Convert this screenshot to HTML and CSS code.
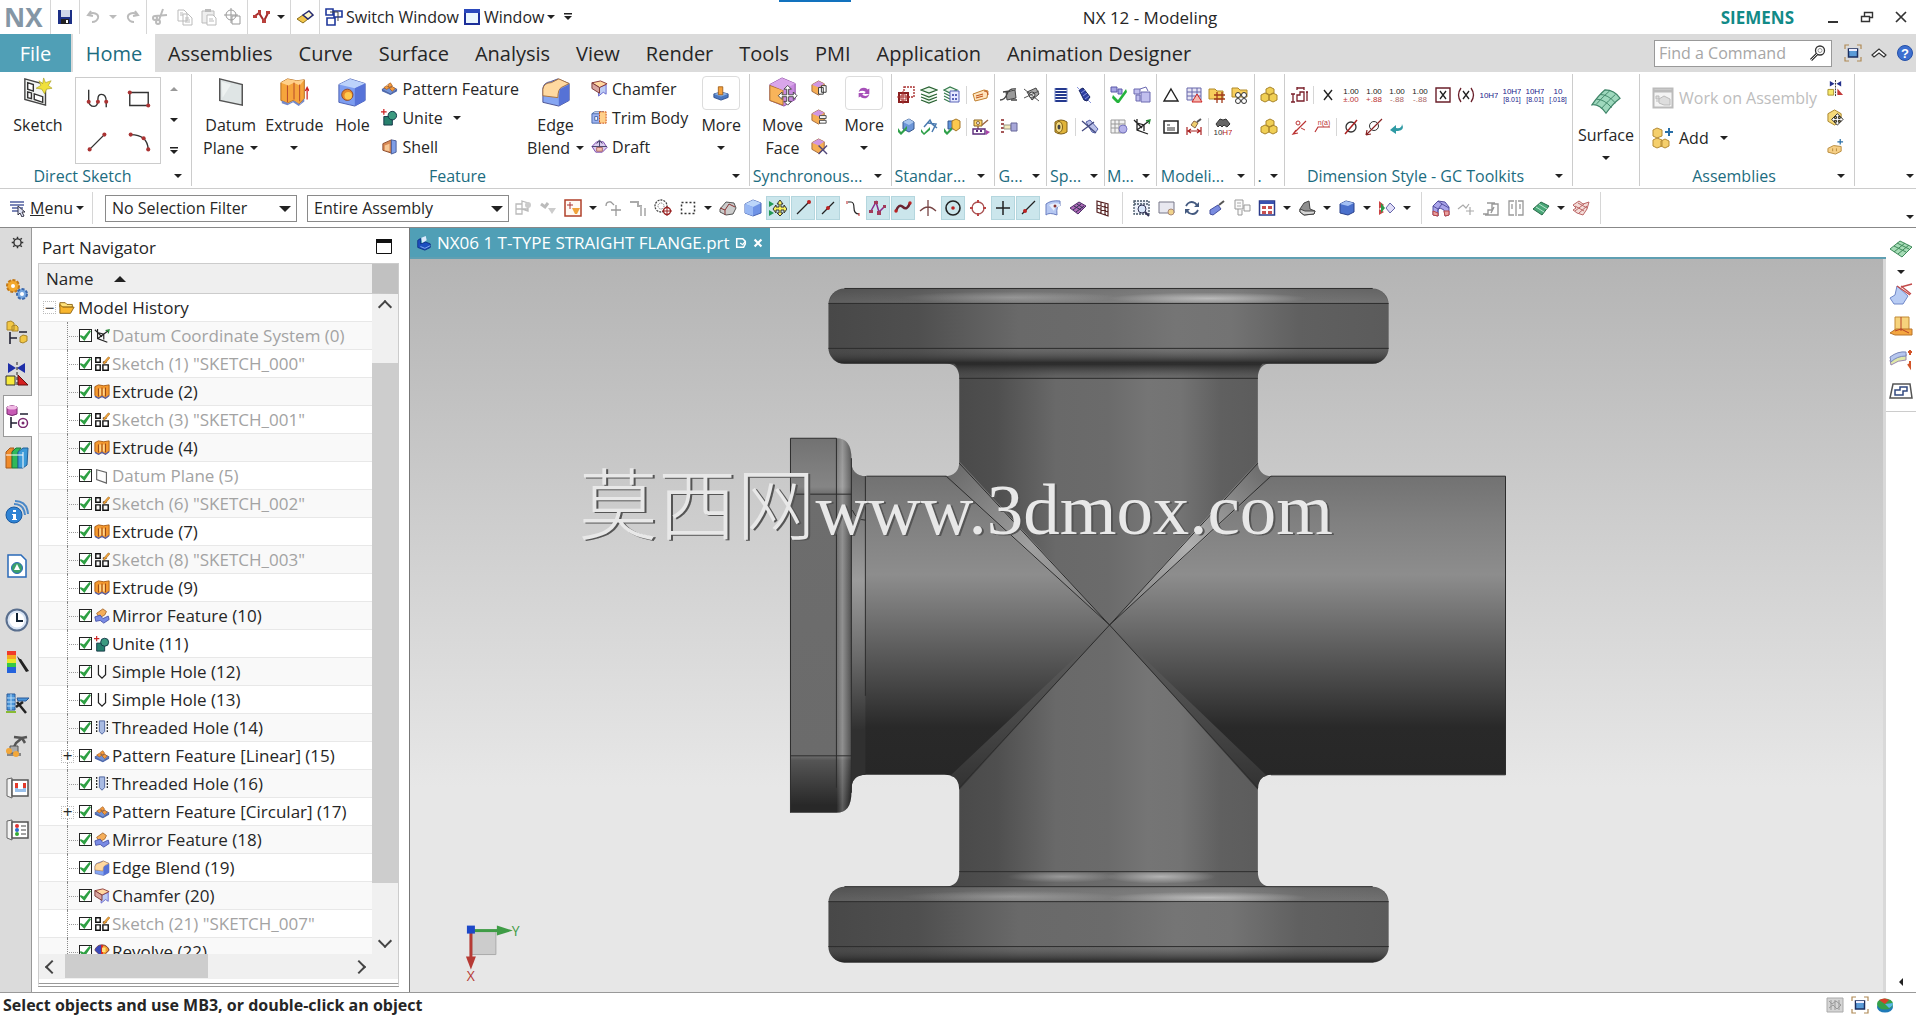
FILE: index.html
```html
<!DOCTYPE html>
<html lang="en">
<head>
  <meta charset="UTF-8" />
  <meta name="viewport" content="width=device-width, initial-scale=1" />
  <title>NX 12 - Modeling</title>
  <link rel="stylesheet" href="styles.css">
</head>
<body>

  <!-- icon sprite -->
  <svg class="sprite" aria-hidden="true">
    <!-- title bar -->
    <symbol id="save" viewBox="0 0 18 18"><path d="M2 2h14v14H2z" fill="#1c2f86"/><path d="M5 2h9v7H5z" fill="#cfd6ea"/><path d="M5 11h8v5H5z" fill="#222"/><path d="M10 12h2v3h-2z" fill="#fff"/></symbol>
    <symbol id="undo" viewBox="0 0 18 18"><path d="M6 3 3 7l5 1M3 7c5-4 11-1 10 3-1 3-3 4-6 4" fill="none" stroke="#bbb" stroke-width="2"/></symbol>
    <symbol id="redo" viewBox="0 0 18 18"><path d="m12 3 3 4-5 1M15 7C10 3 4 6 5 10c1 3 3 4 6 4" fill="none" stroke="#bbb" stroke-width="2"/></symbol>
    <symbol id="cut" viewBox="0 0 18 18"><path d="M11 1 7 12M3 8l12-1" stroke="#bbb" stroke-width="2"/><circle cx="6" cy="14" r="2" fill="none" stroke="#bbb" stroke-width="2"/><circle cx="3" cy="10" r="2" fill="none" stroke="#bbb" stroke-width="2"/></symbol>
    <symbol id="copy" viewBox="0 0 18 18"><path d="M2 2h6l3 3v8H2zM7 6h5l4 4v7H7z" fill="#fff" stroke="#bbb"/><path d="M9 10h4M9 12h5M9 14h5M4 5h3M4 7h3" stroke="#bbb"/></symbol>
    <symbol id="paste" viewBox="0 0 18 18"><path d="M2 3h12v12H2z" fill="#eee" stroke="#bbb"/><path d="M5 1h6v3H5z" fill="#bbb"/><path d="M7 7h6l3 3v7H7z" fill="#fff" stroke="#bbb"/><path d="M9 11h4M9 13h5" stroke="#bbb"/></symbol>
    <symbol id="target" viewBox="0 0 18 18"><circle cx="7" cy="7" r="5" fill="none" stroke="#999"/><path d="M7 0v15M0 7h14M8 8h8v8H8z" fill="none" stroke="#999"/></symbol>
    <symbol id="curve" viewBox="0 0 18 18"><path d="m2 8 4-3 5 8 4-8" fill="none" stroke="#a32a2a" stroke-width="2"/><path d="M0 7h4v3H0zM9 11h4v4H9zM13 3h4v3h-4zM5 2h3v4H5z" fill="#b8403c"/></symbol>
    <symbol id="eraser" viewBox="0 0 18 18"><path d="m1 11 6-4 5 4-5 4z" fill="#f3c64a" stroke="#8a6d1a"/><path d="m7 7 6-4 4 4-5 4z" fill="#fff7c8" stroke="#262a70" stroke-width="1.500"/></symbol>
    <symbol id="switchwin" viewBox="0 0 18 18"><path d="M1 1h7v6H1zM9 3h8v6H9zM2 10h8v7H2z" fill="#fff" stroke="#20399c" stroke-width="1.600"/><path d="M5 4h8v9" fill="none" stroke="#444"/></symbol>
    <symbol id="win" viewBox="0 0 18 18"><path d="M2 2h14v14H2z" fill="#eaf6ff" stroke="#1c2f9a" stroke-width="2"/><path d="M1 1h16v4H1z" fill="#2b49bd"/></symbol>
    <symbol id="custom" viewBox="0 0 10 10"><path d="M1 1h8v1.500H1zM1 4h8L5 8z" fill="#222"/></symbol>
    <symbol id="minimize" viewBox="0 0 14 14"><path d="M2 11h10v2H2z" fill="#333"/></symbol>
    <symbol id="restore" viewBox="0 0 14 14"><path d="M1.500 6.500h8v5h-8zM4.500 6V2.500h8v5H10" fill="none" stroke="#333" stroke-width="1.400"/></symbol>
    <symbol id="close" viewBox="0 0 14 14"><path d="m2 2 10 10M12 2 2 12" stroke="#333" stroke-width="1.700"/></symbol>
    <symbol id="search" viewBox="0 0 18 18"><circle cx="11" cy="6.500" r="4.500" fill="#fff" stroke="#333" stroke-width="1.300"/><path d="M8 10 2 16" stroke="#333" stroke-width="3"/><path d="m8 10-6 6" stroke="#ddd"/><circle cx="11" cy="6.500" r="2" fill="none" stroke="#999"/></symbol>
    <symbol id="full" viewBox="0 0 18 18"><path d="M1 5V1h4M13 1h4v4M17 13v4h-4M5 17H1v-4" fill="none" stroke="#b08a55" stroke-width="1.200"/><path d="M4.500 5h9v8h-9z" fill="#5b9bd8" stroke="#1c2f60" stroke-width="1.500"/><path d="M5 5h8v2H5z" fill="#eef"/></symbol>
    <symbol id="collapse" viewBox="0 0 18 18"><path d="m2 11 7-6 7 6-2 2-5-4-5 4z" fill="#fff" stroke="#333" stroke-width="1.200"/></symbol>
    <symbol id="help" viewBox="0 0 18 18"><circle cx="9" cy="9" r="7.500" fill="#3d6fd0" stroke="#2450a8"/><text x="9" y="14" font-size="13" font-weight="bold" fill="#fff" text-anchor="middle">?</text></symbol>

    <!-- ribbon, large -->
    <symbol id="sketch" viewBox="0 0 32 32"><path d="m2 2 22 6v22L2 24z" fill="#f3f5f3" stroke="#444" stroke-width="1.500"/><path d="m5 6 6 2v7l-6-2zM5 16l4 1v6l-4-1zM12 18l9 3v6l-9-3z" fill="#fff" stroke="#333" stroke-width="1.500"/><path d="m22 1 2 5 6-2-3 5 4 3-6 1-2 5-3-5-6-1 5-3-2-5 4 3z" fill="#f0e03c" stroke="#a8a029" stroke-width=".7"/></symbol>
    <symbol id="datum" viewBox="0 0 32 32"><path d="m4 2 24 6v22L4 25z" fill="#dfe5e5" stroke="#555" stroke-width="1.600"/><path d="m6 5 10 3-9 14z" fill="#eef2f1"/></symbol>
    <symbol id="extrude" viewBox="0 0 32 32"><path d="m2 6 7-4 10 2 8-1v20l-6 6-6-4-6 3-7-3z" fill="#f6a53c" stroke="#b06a1c"/><path d="m2 6 7-4 10 2 8-1-5 6-6-3-6 3z" fill="#ffd08a"/><path d="M9 9v18M16 6v18M22 8v18" stroke="#b3442a"/><path d="m3 25 7 3 6-3 6 4 5-6v3l-6 5-6-4-6 3-6-2z" fill="#7489c8"/><path d="M30 24V12m-2 3 2-4 2 4" fill="none" stroke="#c22" stroke-width="1.300"/></symbol>
    <symbol id="hole" viewBox="0 0 32 32"><path d="m2 8 12-6 16 5v18l-11 6-17-4z" fill="#7d9df0" stroke="#4a5eb0"/><path d="m2 8 12-6 16 5-11 5z" fill="#bcd2fb"/><path d="m19 12 11-5v18l-11 6z" fill="#5773d8"/><circle cx="11" cy="19" r="6" fill="#e78a2a" stroke="#8a4a30"/><circle cx="12" cy="20" r="4" fill="#ffc94e"/></symbol>
    <symbol id="blend" viewBox="0 0 32 32"><path d="M2 12q1-6 8-7l8-3 12 5v18l-11 6-17-4z" fill="#86a6f2" stroke="#4a5090"/><path d="M2 20V13q1-7 9-7l8-4 11 5-8 4q-4 2-4 11z" fill="#ffd9a0" stroke="#a8703c"/><path d="m19 22 1-9 10-5v17l-11 6z" fill="#5672d6"/></symbol>
    <symbol id="moveface" viewBox="0 0 32 32"><path d="m2 8 13-7 14 6v17l-12 7-15-6z" fill="#c98ae0" stroke="#8a4aa0"/><path d="m2 9 14 5v16L2 25z" fill="#f8b45a" stroke="#b0742c"/><path d="m2 8 13-7 14 6-13 7z" fill="#d9a6ea"/><path d="m21 9 4 4h-3v6h5v-3l4 4-4 4v-3h-5v5h3l-4 4-4-4h3v-5h-5v3l-4-4 4-4v3h5v-6h-3z" fill="#fff" stroke="#444"/></symbol>
    <symbol id="boss" viewBox="0 0 18 18"><path d="M1 10l8-2 8 2v4l-8 3-8-3z" fill="#4b78c0" stroke="#2c4c88"/><path d="m1 10 8-2 8 2-8 3z" fill="#8ab2e6"/><path d="M6 2h5v9H6z" fill="#f4a13c" stroke="#a0601c"/></symbol>
    <symbol id="swap" viewBox="0 0 18 18"><path d="M3 8q1-5 6-5 3 0 4 2l2-1v6h-6l2-2q-4-3-8 0zM15 10q-1 5-6 5-3 0-4-2l-2 1V9h6l-2 2q4 3 8-1z" fill="#a64fb8"/></symbol>
    <symbol id="surface" viewBox="0 0 32 32"><path d="M1 19Q8 9 15 3q10 0 16 9-8 6-15 16Q9 18 1 19z" fill="#9ed8bd" stroke="#3f8468" stroke-width="1.300"/><path d="M6 13q8 0 16 9M10 8q8 0 16 9M6 18q7-8 14-14M11 23q8-9 15-15" fill="none" stroke="#3f8468"/></symbol>

    <!-- direct sketch -->
    <symbol id="profile" viewBox="0 0 26 26"><path d="M4 3v11q0 7 6 7 4 0 4-8 0-5 4-5 5 0 5 8v6" fill="none" stroke="#333" stroke-width="1.500"/><g fill="#a33"><circle cx="4" cy="16" r="2.200"/><circle cx="14" cy="16" r="2.200"/><circle cx="23" cy="16" r="2.200"/></g></symbol>
    <symbol id="rect" viewBox="0 0 26 26"><path d="M3 6h20v14H3z" fill="none" stroke="#333" stroke-width="1.500"/><g fill="#a33"><circle cx="3" cy="6" r="2.200"/><circle cx="23" cy="20" r="2.200"/></g></symbol>
    <symbol id="line" viewBox="0 0 26 26"><path d="M5 21 21 5" stroke="#333" stroke-width="1.500"/><g fill="#a33"><circle cx="5" cy="21" r="2.200"/><circle cx="21" cy="5" r="2.200"/></g></symbol>
    <symbol id="arc" viewBox="0 0 26 26"><path d="M4 5q18 0 19 16" fill="none" stroke="#333" stroke-width="1.500"/><g fill="#a33"><circle cx="4" cy="5" r="2.200"/><circle cx="18" cy="9" r="2.200"/><circle cx="23" cy="21" r="2.200"/></g></symbol>

    <!-- ribbon, small -->
    <symbol id="pattern" viewBox="0 0 18 18"><path d="m1 10 8-4 8 4-7 5z" fill="#6f92d8" stroke="#4a5a90"/><path d="m1 10 9 5 7-5v2l-7 4-9-4z" fill="#4a66ad"/><path d="m3 8 3-2 3 2-3 2zM7 5l3-2 2 3-3 2zM9 9l3-2 3 2-3 3z" fill="#f49a3c" stroke="#a35a1c" stroke-width=".7"/></symbol>
    <symbol id="unite" viewBox="0 0 18 18"><path d="M3 8h9v9H3z" fill="#27806d" stroke="#134"/><circle cx="12" cy="7" r="4.500" fill="#3c9a80" stroke="#134"/><path d="M3 0v6M0 3h6" stroke="#c22" stroke-width="1.300"/></symbol>
    <symbol id="shell" viewBox="0 0 18 18"><path d="m2 6 9-4v14L2 13z" fill="#d98a55" stroke="#8a4a2a"/><path d="m11 2 5 1v12l-5 2z" fill="#7f9ee6" stroke="#4a5e9a"/><path d="m4 8 5-2v8l-5-1z" fill="#f7c896"/></symbol>
    <symbol id="chamfer" viewBox="0 0 18 18"><path d="m8 8 8-3v10l-3-2-5 4z" fill="#bccbf4" stroke="#66c"/><path d="m1 3 9-2 7 3-8 4z" fill="#ffd7a0" stroke="#833"/><path d="m1 3 8 5v6L1 9z" fill="#d9a6a0" stroke="#733"/></symbol>
    <symbol id="trim" viewBox="0 0 18 18"><path d="M1 5h9v10H1z" fill="#9db3f0" stroke="#46a"/><path d="M1 5l3-2h9v3" fill="none" stroke="#46a"/><path d="M9 3h7v12H9z" fill="#ffd08a" stroke="#c40" stroke-dasharray="2 1"/><path d="M4 8h3v4H4z" fill="#fff" stroke="#46a"/></symbol>
    <symbol id="draft" viewBox="0 0 18 18"><path d="m1 9 5-5 7 0 4 6-5 5H5z" fill="#dccdf0" stroke="#74a"/><path d="M9 3v10M6 6l3-4 3 4M1 9h16" fill="none" stroke="#446"/><path d="M6 10h6v4H6z" fill="#f4c0b0" stroke="#a66"/></symbol>
    <symbol id="facecopy" viewBox="0 0 18 18"><path d="m1 5 7-4 6 3v8l-6 4-7-4z" fill="#f6ae55" stroke="#a0683c"/><path d="m1 5 7-4 6 3-6 4z" fill="#cf96e2"/><path d="M8 8h5v7H8zM11 6h5v7h-5z" fill="#fff" stroke="#333"/></symbol>
    <symbol id="faceoff" viewBox="0 0 18 18"><path d="m1 5 7-4 6 3v8l-6 4-7-4z" fill="#f6ae55" stroke="#a0683c"/><path d="m1 5 7-4 6 3-6 4z" fill="#cf96e2"/><path d="M9 7h7v3H9zM9 12h7v3H9z" fill="#fff" stroke="#444"/></symbol>
    <symbol id="facedel" viewBox="0 0 18 18"><path d="m1 5 7-4 6 3v8l-6 4-7-4z" fill="#f6ae55" stroke="#a0683c"/><path d="m1 5 7-4 6 3-6 4z" fill="#cf96e2"/><path d="m8 8 9 9M17 8l-9 9" stroke="#52487a" stroke-width="1.500"/></symbol>

    <!-- gc toolkits -->
    <symbol id="gcframe" viewBox="0 0 18 18"><path d="M7 1h10v10H7z" fill="none" stroke="#a33" stroke-width="1.400" stroke-dasharray="2 1"/><path d="M2 7h9v9H2z" fill="#fff0ea" stroke="#8a1f1f" stroke-width="2"/><path d="M4 9h5v5H4zM0 11h13M6 5v13" fill="none" stroke="#a33"/></symbol>
    <symbol id="layers" viewBox="0 0 18 18"><path d="m1 4 8-3 8 3-8 3zM1 8l8 3 8-3M1 11l8 3 8-3M1 14l8 3 8-3" fill="#e9f7ea" stroke="#276030" stroke-width="1.200"/></symbol>
    <symbol id="laytab" viewBox="0 0 18 18"><path d="m1 4 6-3 7 3-7 3zM1 7l6 3M1 10l6 3M1 13l6 3" fill="#e9f7ea" stroke="#357a4c" stroke-width="1.200"/><path d="M7 5h9v11H7z" fill="#e6e9ff" stroke="#5a64b8"/><path d="M9 8h2v2H9zM12 8h2v2h-2zM9 12h2v2H9zM12 12h2v2h-2z" fill="#5a64b8"/></symbol>
    <symbol id="note" viewBox="0 0 18 18"><path d="m1 8 11-4 4 1-1 7-12 3z" fill="#ffe4bd" stroke="#c08030"/><path d="m4 10 7-2M4 12l7-2M12 5q4 0 4 4" fill="none" stroke="#c05a20" stroke-width="1.200"/></symbol>
    <symbol id="cubechk" viewBox="0 0 18 18"><path d="m6 4 6-3 5 3v7l-5 3-6-3z" fill="#6c96d8" stroke="#36588e"/><path d="m6 4 6-3 5 3-5 3z" fill="#a8c6ee"/><path d="m1 10 3 4 6-6v3l-6 6-3-3z" fill="#2fa04a"/></symbol>
    <symbol id="wirechk" viewBox="0 0 18 18"><path d="m4 9 6-7 2 4 5 4M8 5l8 1-4 8" fill="none" stroke="#4a7ab0" stroke-width="1.500"/><path d="m1 11 3 4 6-6v3l-6 5-3-3z" fill="#2fa04a"/></symbol>
    <symbol id="boxchk" viewBox="0 0 18 18"><path d="M5 3h7v8H5z" fill="#5f93dc" stroke="#36588e"/><path d="m9 3 4-2 4 2v7l-4 3-4-3z" fill="#fcc94e" stroke="#a8792a"/><path d="m1 10 3 4 5-5v3l-5 5-3-3z" fill="#2fa04a"/></symbol>
    <symbol id="robot" viewBox="0 0 18 18"><path d="M2 2h8v6H2z" fill="#ffd66a" stroke="#8a6420"/><circle cx="6" cy="5" r="1.500" fill="#fff" stroke="#864"/><path d="m10 7 6-5M6 8v4" stroke="#964" stroke-width="1.500"/><path d="M1 11h12v5H1z" fill="#fff" stroke="#5a2a7a" stroke-width="1.400"/><path d="M4 13h2M8 13h2" stroke="#5a2a7a" stroke-width="2"/><path d="m14 12 4 2-4 3z" fill="#a4a"/></symbol>
    <symbol id="gear1" viewBox="0 0 18 18"><path d="m6 6 9-2 1 8-9 2z" fill="#9a9a9a" stroke="#444"/><path d="M0 14q5 0 7-6t9-5M3 6l7-1M11 14h6" fill="none" stroke="#444" stroke-width="1.300"/></symbol>
    <symbol id="gear2" viewBox="0 0 18 18"><path d="m4 6 9-4 3 6-7 6z" fill="#aaa" stroke="#444"/><circle cx="9" cy="9" r="3" fill="#ddd" stroke="#444"/><path d="m1 3 15 12M1 12l15-7" stroke="#555"/></symbol>
    <symbol id="gear3" viewBox="0 0 18 18"><path d="M1 2h4M1 6h4M1 10h4M1 14h4" stroke="#822" stroke-width="1.300" stroke-dasharray="3 1"/><path d="M4 7h7v4H4z" fill="#f4ecc0" stroke="#998"/><path d="M11 5h6v8h-6z" fill="#a8a8d8" stroke="#669"/></symbol>
    <symbol id="coil" viewBox="0 0 18 18"><path d="M3 3h12M3 6h12M3 9h12M3 12h12M3 15h12" stroke="#24398e" stroke-width="2"/><path d="M3 2v14M15 2v14" stroke="#7f90cc"/></symbol>
    <symbol id="coil2" viewBox="0 0 18 18"><path d="m4 4 4-2 7 9-3 4-3-1z" fill="#2e3fa2" stroke="#16235e"/><path d="m2 1 3 3m8 10 3 3M6 7l4-3M8 10l4-3M10 13l4-3" stroke="#8a96dc"/></symbol>
    <symbol id="bearing" viewBox="0 0 18 18"><path d="M3 4q6-4 12 0v10q-6 4-12 0z" fill="#e0b43a" stroke="#806018"/><ellipse cx="7" cy="9" rx="3.500" ry="5.500" fill="#f6dc80" stroke="#806018"/><ellipse cx="7" cy="9" rx="1.500" ry="2.500" fill="#444"/></symbol>
    <symbol id="coildel" viewBox="0 0 18 18"><path d="m5 4 4-2 8 9-3 4-3-1z" fill="#b9c0e8" stroke="#5560a8"/><path d="m1 3 14 12M1 13 13 4" stroke="#444a80" stroke-width="1.300"/></symbol>
    <symbol id="mchk" viewBox="0 0 18 18"><path d="M1 1h6v5H1zM8 3h4v5H8z" fill="#a7a5e4" stroke="#5a58a8"/><path d="m3 9 5 5 8-11 1 3-8 11h-2L2 12z" fill="#24b33c"/></symbol>
    <symbol id="mstack" viewBox="0 0 18 18"><path d="M1 3h6v5H1zM8 6h9v10H8zM3 9h4v6H3z" fill="#c1bfee" stroke="#6a68b0"/><path d="m7 3 6-2 2 4" fill="none" stroke="#6a68b0"/></symbol>
    <symbol id="mtab" viewBox="0 0 18 18"><path d="M1 2h14v13H1zM5 2v13M9 2v13M1 6h14M1 10h14" fill="#f2f2f2" stroke="#999"/><circle cx="13" cy="11" r="4" fill="#b6b3ea" stroke="#7a78c0"/></symbol>
    <symbol id="csys" viewBox="0 0 18 18"><path d="M4 1v11l11 4M4 12 16 3M4 5l7 2v6M1 2l8 8" fill="none" stroke="#222" stroke-width="1.300"/><path d="m13 3 4-1-1 4" fill="none" stroke="#283" stroke-width="1.300"/></symbol>
    <symbol id="tri" viewBox="0 0 18 18"><path d="m9 3 7 12H2z" fill="none" stroke="#222" stroke-width="1.400"/></symbol>
    <symbol id="tabtri" viewBox="0 0 18 18"><path d="M2 2h14v12H2zM2 6h14M2 10h14M7 2v12M12 2v12" fill="#e8e6f4" stroke="#66a"/><path d="m12 8 5 8H7z" fill="#f6b8b0" stroke="#c22"/></symbol>
    <symbol id="foldhash" viewBox="0 0 18 18"><path d="M1 3h6l2 2h6v8H1z" fill="#f7ce5c" stroke="#b08a2a"/><path d="M6 9h11M6 13h11M9 6v11M14 6v11" stroke="#a03a1a" stroke-width="1.300"/></symbol>
    <symbol id="foldring" viewBox="0 0 18 18"><path d="M1 2h6l2 2h7v7H1z" fill="#f7ce5c" stroke="#b08a2a"/><g fill="#fff" stroke="#333"><circle cx="7" cy="9" r="2.500"/><circle cx="13" cy="9" r="2.500"/><circle cx="7" cy="15" r="2.500"/><circle cx="13" cy="15" r="2.500"/></g></symbol>
    <symbol id="card" viewBox="0 0 18 18"><path d="M2 3h14v12H2z" fill="#fff" stroke="#222" stroke-width="1.500"/><path d="M5 7h3M5 10h8M5 12h8" stroke="#333"/></symbol>
    <symbol id="dimbrush" viewBox="0 0 18 18"><path d="M2 9v8M16 9v8M3 13h12M6 11l-3 2 3 2M12 11l3 2-3 2" fill="none" stroke="#a22" stroke-width="1.200"/><path d="m6 7 3-4 4 2-3 5z" fill="#f0d070" stroke="#864"/><path d="m12 4 4-3" stroke="#555" stroke-width="2"/></symbol>
    <symbol id="find" viewBox="0 0 18 18"><path d="m2 6 4-5 3 1 3-1 4 5-3 3-3-2-2 2-2-2-2 2z" fill="#666" stroke="#333"/><text x="9" y="17" font-size="8" text-anchor="middle" fill="#333">10<tspan fill="#b22">H7</tspan></text></symbol>
    <symbol id="cubes" viewBox="0 0 18 18"><g fill="#f0cf55" stroke="#a8842a"><path d="m6 3 4-2 4 2v4l-4 2-4-2zM1 9l4-2 4 2v5l-4 2-4-2zM9 9l4-2 4 2v5l-4 2-4-2z"/></g></symbol>
    <symbol id="dimrect" viewBox="0 0 18 18"><path d="M7 2h7M7 1v3M14 1v3M1 8h4M3 8v8M1 16h4M7 15V9h3V6h4v9zM16 6h2M17 6v9" fill="none" stroke="#7a1f2a" stroke-width="1.300"/></symbol>
    <symbol id="xx" viewBox="0 0 18 18"><path d="m5 4 8 10M13 4 5 14" stroke="#222" stroke-width="1.400"/></symbol>
    <symbol id="tol1" viewBox="0 0 18 18"><text x="9" y="8" font-size="8" text-anchor="middle" fill="#222">1.00</text><text x="9" y="16" font-size="8" text-anchor="middle" fill="#b33">±.00</text></symbol>
    <symbol id="tol2" viewBox="0 0 18 18"><text x="9" y="8" font-size="8" text-anchor="middle" fill="#222">1.00</text><text x="9" y="16" font-size="8" text-anchor="middle" fill="#b33">+.88</text></symbol>
    <symbol id="tol3" viewBox="0 0 18 18"><text x="9" y="8" font-size="8" text-anchor="middle" fill="#222">1.00</text><text x="9" y="16" font-size="8" text-anchor="middle" fill="#a66">-.88</text></symbol>
    <symbol id="xbox" viewBox="0 0 18 18"><path d="M2 2h14v14H2z" fill="none" stroke="#6a1f2a" stroke-width="1.400"/><path d="m6 5 6 8M12 5l-6 8" stroke="#222" stroke-width="1.300"/></symbol>
    <symbol id="xpar" viewBox="0 0 18 18"><path d="M4 2q-5 7 0 14M14 2q5 7 0 14" fill="none" stroke="#6a1f2a" stroke-width="1.300"/><path d="m6 5 6 8M12 5l-6 8" stroke="#222" stroke-width="1.300"/></symbol>
    <symbol id="fit1" viewBox="0 0 18 18"><text x="9" y="12" font-size="8" text-anchor="middle" fill="#22228a">10H7</text></symbol>
    <symbol id="fit2" viewBox="0 0 18 18"><text x="9" y="8" font-size="8" text-anchor="middle" fill="#22228a">10H7</text><text x="9" y="16" font-size="7" text-anchor="middle" fill="#22228a">[8.01]</text></symbol>
    <symbol id="fit3" viewBox="0 0 18 18"><text x="9" y="8" font-size="8" text-anchor="middle" fill="#22228a">10</text><text x="9" y="16" font-size="7" text-anchor="middle" fill="#22228a">[.018]</text></symbol>
    <symbol id="redslash" viewBox="0 0 18 18"><path d="M3 16 16 3M6 12l-3 4 5-1" fill="none" stroke="#b33" stroke-width="1.200"/><circle cx="8" cy="5" r="2" fill="none" stroke="#b33"/><path d="m11 10 4 2" stroke="#b33"/></symbol>
    <symbol id="rednote" viewBox="0 0 18 18"><path d="M2 14 5 9h12" fill="none" stroke="#b33" stroke-width="1.200"/><text x="11" y="7" font-size="7" text-anchor="middle" fill="#b33">n(a)</text></symbol>
    <symbol id="dia" viewBox="0 0 18 18"><circle cx="9" cy="9" r="5" fill="none" stroke="#333" stroke-width="1.300"/><path d="M3 16 15 2" stroke="#a22" stroke-width="1.500"/></symbol>
    <symbol id="dia2" viewBox="0 0 18 18"><circle cx="9" cy="8" r="4.500" fill="none" stroke="#333"/><path d="M1 17 17 1M1 17l1-5M1 17l5-1" fill="none" stroke="#822" stroke-width="1.200"/></symbol>
    <symbol id="back" viewBox="0 0 18 18"><path d="M14 6q3 6-4 7H8v3l-6-4 6-5v3q6 1 6-4z" fill="#2f9aa4"/></symbol>

    <!-- assemblies -->
    <symbol id="workasm" viewBox="0 0 22 22"><path d="M1.500 1.500h19v19h-19z" fill="#f4f4f4" stroke="#bbb" stroke-width="2"/><path d="M2 4h18" stroke="#bbb" stroke-width="3"/><path d="m7 12 5-3 6 3v6h-6l-5-2zM4 9h3v3H4zM4 14h3" fill="#ddd" stroke="#bbb"/></symbol>
    <symbol id="addasm" viewBox="0 0 22 22"><g fill="#f5cf6c" stroke="#b58b35"><path d="m1 3 4-2 5 2v6l-5 2-4-2zM1 13l4-2 5 2v6l-5 2-4-2zM9 14l4-2 4 2v5l-4 2-4-2z"/></g><path d="M17 1v8M13 5h8" stroke="#2a6fa8" stroke-width="2"/></symbol>
    <symbol id="mirrorasm" viewBox="0 0 18 18"><path d="m3 1 5 3-5 3zM15 1l-5 3 5 3z" fill="#23308c"/><path d="M9 0v18" stroke="#333" stroke-dasharray="2 1"/><path d="M1 10h6v6H1z" fill="#f7e96a" stroke="#a89030"/><path d="M11 9v7h6z" fill="#c23a3a"/></symbol>
    <symbol id="moveasm" viewBox="0 0 18 18"><path d="m1 5 7-4 7 4v8l-7 4-7-4z" fill="#f5d97a" stroke="#a8842a"/><path d="m11 5 3 3h-2v2h2V8l3 3-3 3v-2h-2v2h2l-3 3-3-3h2v-2H8v2l-3-3 3-3v2h2V8H8z" fill="#fff" stroke="#222"/></symbol>
    <symbol id="conasm" viewBox="0 0 18 18"><path d="m1 11 6-3 8 1v5l-6 3-8-2z" fill="#f6cf86" stroke="#b88a3a"/><path d="M6 11v3M10 11v3" stroke="#b88a3a"/><path d="M14 1v6M11 4h6" stroke="#2a6fa8" stroke-width="1.300"/></symbol>

    <!-- selection bar -->
    <symbol id="menu" viewBox="0 0 18 18"><path d="M1 3h14M1 6h14M3 9h11M3 12h6" stroke="#5260a0" stroke-width="1.500"/><path d="m9 7 7 6h-3l2 4-2 1-2-4-2 2z" fill="#dfe3f4" stroke="#334"/></symbol>
    <symbol id="gr1" viewBox="0 0 18 18"><path d="M2 5h6v10H2zM2 10h12M8 2l6 2v8l-6-2z" fill="none" stroke="#bbb" stroke-width="1.300"/><circle cx="14" cy="6" r="3" fill="#ccc"/></symbol>
    <symbol id="gr2" viewBox="0 0 18 18"><path d="m2 5 4 3 3-4" fill="none" stroke="#bbb" stroke-width="3"/><path d="M9 9h8l-4 6z" fill="#ccc"/></symbol>
    <symbol id="selfilt" viewBox="0 0 18 18"><path d="M1 1h16v16H1z" fill="#fffaf4" stroke="#b0402a" stroke-width="1.500"/><path d="M6 3v7M3 6h6" stroke="#a33"/><path d="M8 9h8l-3 6h-2z" fill="#f0a23a"/></symbol>
    <symbol id="gr3" viewBox="0 0 18 18"><path d="M2 7q0-5 5-4l3 3M12 6v11M7 11h10" fill="none" stroke="#999" stroke-width="1.300"/></symbol>
    <symbol id="gr4" viewBox="0 0 18 18"><path d="M1 3h8v4h4" fill="none" stroke="#aaa" stroke-width="2"/><path d="M11 7h2v10h-2zM15 9h2v8h-2z" fill="#bbb"/></symbol>
    <symbol id="pick" viewBox="0 0 18 18"><circle cx="7" cy="7" r="6" fill="none" stroke="#444" stroke-width="1.300" stroke-dasharray="2 1"/><circle cx="7" cy="7" r="3" fill="none" stroke="#666" stroke-dasharray="1 1"/><circle cx="13" cy="12" r="3.500" fill="#fff" stroke="#922" stroke-width="1.400"/><path d="M13 7v10M8 12h10" stroke="#922"/></symbol>
    <symbol id="marquee" viewBox="0 0 18 18"><path d="M2.500 3.500h13v11h-13z" fill="none" stroke="#333" stroke-width="1.500" stroke-dasharray="2 2"/></symbol>
    <symbol id="bodyred" viewBox="0 0 18 18"><path d="m1 10 6-7 8 1 2 5-3 6-7 1-6-3z" fill="#ccc" stroke="#555"/><path d="m1 9 5 2 4-6M6 11v5M10 5l6 3" fill="none" stroke="#833"/></symbol>
    <symbol id="cube" viewBox="0 0 18 18"><path d="m1 5 8-4 8 3v10l-8 3-8-3z" fill="#6f93e6" stroke="#4a66b4"/><path d="m1 5 8-4 8 3-8 4z" fill="#bcd6fa"/><path d="M1 5l8 3v9l-8-3z" fill="#98b8f4"/></symbol>
    <symbol id="snap" viewBox="0 0 18 18"><path d="m0 2 5 3-5 3zM0 11l5 3-5 3z" fill="#295"/><path d="m11 1 3 4h-2v3h3V6l3 4-3 4v-3h-3v3h2l-3 3-3-3h2v-3H7v3l-3-4 3-4v2h3V5H8z" fill="#f7ee5c" stroke="#333"/></symbol>
    <symbol id="sn-end" viewBox="0 0 18 18"><path d="M3 15 14 4" stroke="#222" stroke-width="1.300"/><circle cx="15" cy="3" r="2" fill="#b22"/></symbol>
    <symbol id="sn-mid" viewBox="0 0 18 18"><path d="M3 15 15 3" stroke="#222" stroke-width="1.300"/><circle cx="9" cy="9" r="2" fill="#b22"/></symbol>
    <symbol id="sn-ctrl" viewBox="0 0 18 18"><path d="M4 3h3q3 0 3 6t5 6" fill="none" stroke="#222" stroke-width="1.200"/><path d="M3 2v3M15 14v3" stroke="#b22"/></symbol>
    <symbol id="sn-pole" viewBox="0 0 18 18"><path d="m2 12 5-9 3 10 6-6" fill="none" stroke="#8a2a8a" stroke-width="1.500"/><path d="M0 11h4v3H0zM5 2h4v3H5zM8 12h4v4H8zM14 6h3v3h-3z" fill="#a23a5a"/></symbol>
    <symbol id="sn-spl" viewBox="0 0 18 18"><path d="M2 12q3-8 7-4t7-4" fill="none" stroke="#6a2330" stroke-width="2.500"/><circle cx="2" cy="12" r="1.700" fill="#b22"/><circle cx="16" cy="4" r="1.700" fill="#b22"/></symbol>
    <symbol id="sn-int" viewBox="0 0 18 18"><path d="M9 1v16M1 12q8-8 16 0" fill="none" stroke="#744" stroke-width="1.300"/></symbol>
    <symbol id="sn-cen" viewBox="0 0 18 18"><circle cx="9" cy="9" r="7" fill="none" stroke="#222" stroke-width="1.600"/><circle cx="9" cy="9" r="1.800" fill="#b22"/></symbol>
    <symbol id="sn-quad" viewBox="0 0 18 18"><circle cx="9" cy="9" r="6" fill="none" stroke="#a55" stroke-width="1.300"/><path d="M8 1h2v3H8zM8 14h2v3H8zM1 8h3v2H1zM14 8h3v2h-3z" fill="#b44"/></symbol>
    <symbol id="sn-pt" viewBox="0 0 18 18"><path d="M9 2v14M2 9h14" stroke="#222" stroke-width="1.500"/></symbol>
    <symbol id="sn-on" viewBox="0 0 18 18"><path d="M3 15 16 2" stroke="#222" stroke-width="1.300"/><circle cx="6" cy="12" r="2" fill="#b22"/></symbol>
    <symbol id="sn-face" viewBox="0 0 18 18"><path d="M2 5q5-4 14-3v5q-4-1-3 9-8-3-11 0z" fill="#b6c8f2" stroke="#6a7ec0"/><path d="M5 6q5-3 11-1v3q-5-1-6 4z" fill="#e8effc"/><circle cx="11" cy="7" r="1.500" fill="#833"/></symbol>
    <symbol id="sn-mesh" viewBox="0 0 18 18"><path d="m1 9 9-6 7 4-8 8z" fill="#b06ab8" stroke="#50306a"/><path d="m5 7 7 4M8 5l6 4M4 11l8-6M7 13l8-6" stroke="#335"/></symbol>
    <symbol id="sn-grid" viewBox="0 0 18 18"><path d="m3 2 11 3v12L3 13zM7 3v11M11 4v12M3 6l11 3M3 9l11 4" fill="none" stroke="#522" stroke-width="1.200"/></symbol>
    <symbol id="zoomfit" viewBox="0 0 18 18"><path d="M1 2h15v13H1zM1 5h15" fill="#eef2fa" stroke="#456" stroke-width="1.300" stroke-dasharray="2 1"/><circle cx="9" cy="10" r="4" fill="#dbe9fb" stroke="#335"/><path d="m12 13 4 4" stroke="#335" stroke-width="2"/></symbol>
    <symbol id="zoomwin" viewBox="0 0 18 18"><path d="M1 3h15v11H1z" fill="#e8e8f0" stroke="#778"/><circle cx="13" cy="13" r="3" fill="#f0d38a" stroke="#a87"/></symbol>
    <symbol id="rotate" viewBox="0 0 18 18"><path d="M3 7q3-6 9-3l3 3M15 11q-3 6-9 3l-3-3" fill="none" stroke="#445a80" stroke-width="1.800"/><path d="M16 3v5h-5zM2 15v-5h5z" fill="#445a80"/></symbol>
    <symbol id="pen" viewBox="0 0 18 18"><path d="m2 11 8-5 3 4-8 6-3-1z" fill="#7a8ce0" stroke="#4450a0"/><path d="m11 6 5-4" stroke="#555" stroke-width="2"/></symbol>
    <symbol id="sheets" viewBox="0 0 18 18"><path d="M2 1h8v9H2zM5 10v6h4v-5M11 6h6v6h-6z" fill="#fafafa" stroke="#999"/><path d="M4 4h4M4 7h4" stroke="#aaa"/></symbol>
    <symbol id="wintab" viewBox="0 0 18 18"><path d="M1.500 2h15v14h-15z" fill="#fff" stroke="#2a3a8a" stroke-width="1.500"/><path d="M2 2h14v3H2z" fill="#3a52b0"/><path d="M4 7h4v3H4zM10 7h4v3h-4zM4 12h4v3H4zM10 12h4v3h-4z" fill="#c85050"/></symbol>
    <symbol id="shade" viewBox="0 0 18 18"><path d="m2 10 4-6 5-2 1 8 5 2-1 3-10 1-4-3z" fill="#8e8e8e" stroke="#444"/><path d="m2 10 5 2 10 0-1 3-10 1-4-3z" fill="#d6d6d6" stroke="#444"/></symbol>
    <symbol id="bluecube" viewBox="0 0 18 18"><path d="m2 5 6-3 8 2v9l-6 3-8-2z" fill="#4a70cc" stroke="#2a428c"/><path d="m2 5 6-3 8 2-6 3z" fill="#a4c0f4"/></symbol>
    <symbol id="play" viewBox="0 0 18 18"><path d="m1 2 5 4-5 4zM1 10l5 3-5 3z" fill="#c44"/><path d="m3 4 4 5-4 5z" fill="#2a9a4a"/><path d="m12 4 5 5-5 5-4-5z" fill="#e0ddf8" stroke="#66a"/></symbol>
    <symbol id="magnet" viewBox="0 0 18 18"><path d="m1 7 5-5 7 1 4 5v8l-4 1-1-6-4-2-2 2v6l-5-1z" fill="#a9a4ea" stroke="#5550a0"/><path d="m1 7 5 3 4-5 7 4M6 10v7M10 5 6 2" fill="none" stroke="#5550a0"/><path d="m1 12 5 2v3l-5-1zM12 12l5 0v4l-4 1z" fill="#e6a0a0" stroke="#b44"/></symbol>
    <symbol id="gpts" viewBox="0 0 18 18"><path d="m1 10 5-4 3 3 3-4M13 8v8M9 12h8" fill="none" stroke="#aaa" stroke-width="1.200"/></symbol>
    <symbol id="gstep" viewBox="0 0 18 18"><path d="M1 15h5v-4h4V5h6v11H3M5 4h8M12 8l-3 6" fill="none" stroke="#999" stroke-width="1.400"/></symbol>
    <symbol id="gsplit" viewBox="0 0 18 18"><path d="M7 2H2v14h5M11 2h5v14h-5M9 1v16M5 5v5M13 5v5" fill="none" stroke="#999" stroke-width="1.300"/></symbol>
    <symbol id="green" viewBox="0 0 18 18"><path d="m1 10 8-7 8 4-7 9z" fill="#4aa878" stroke="#2a6a4a"/><path d="m4 8 8 5M7 5l8 5" stroke="#b8e6cf"/></symbol>
    <symbol id="redmesh" viewBox="0 0 18 18"><path d="m1 6 6-4 4 3 6-2-2 7-4 6-6-2-4-3 3-2z" fill="#f4dcd8" stroke="#b66"/><path d="m3 7 9 5M6 4l9 5M3 12l9-7M7 14l8-7" stroke="#b66"/></symbol>

    <!-- resource bar -->
    <symbol id="cog" viewBox="0 0 18 18"><circle cx="9" cy="9" r="5" fill="none" stroke="#333" stroke-width="2"/><path d="M9 1v3M9 14v3M1 9h3M14 9h3M3 3l2 2M13 13l2 2M15 3l-2 2M5 13l-2 2" stroke="#333" stroke-width="2"/></symbol>
    <symbol id="cogs" viewBox="0 0 24 24"><circle cx="8" cy="8" r="6" fill="#f3a92e" stroke="#c27a1c" stroke-width="2" stroke-dasharray="3 1.500"/><circle cx="8" cy="8" r="2" fill="#fff"/><circle cx="17" cy="16" r="5" fill="#77a7e0" stroke="#3a68ad" stroke-width="2" stroke-dasharray="3 1.500"/><circle cx="17" cy="16" r="2" fill="#fff"/></symbol>
    <symbol id="asmnav" viewBox="0 0 24 24"><g fill="#f2c744" stroke="#a8842a"><path d="m2 2 4-1 3 2v7H2zM7 6l4-1 2 2v4H7zM15 17l3-2 4 1v5l-4 2-3-1z"/></g><path d="M5 12v12M5 18h7M14 12h8" stroke="#223" stroke-width="1.600"/></symbol>
    <symbol id="conflict" viewBox="0 0 24 24"><path d="m3 1 8 5-8 5zM20 1l-8 5 8 5z" fill="#1f2fa8"/><path d="M12 0v24" stroke="#222" stroke-dasharray="3 2"/><path d="M1 14h9v9H1z" fill="#f7ea3a" stroke="#333"/><path d="M13 13v10h10z" fill="#d42020" stroke="#611"/></symbol>
    <symbol id="partnav" viewBox="0 0 24 24"><path d="M1 3q5-3 10 0v7q-5 3-10 0z" fill="#c65ab4" stroke="#7a2a70"/><ellipse cx="6" cy="3.500" rx="5" ry="2" fill="#f0b8e4"/><path d="M14 10h8M5 13v11M5 19h6" stroke="#223" stroke-width="1.600"/><circle cx="17" cy="19" r="4.500" fill="#fff" stroke="#7a2a70" stroke-width="1.500"/><circle cx="17" cy="19" r="1.500" fill="#7a2a70"/></symbol>
    <symbol id="books" viewBox="0 0 24 24"><path d="m1 6 4-4h4L7 6v16H1z" fill="#ef8a2a" stroke="#a85a1a"/><path d="m7 6 4-4h5l-3 4v16H7z" fill="#2fb85a" stroke="#1c7a3a"/><path d="m13 6 5-4h5l-1 17-4 3h-5z" fill="#3c9ad8" stroke="#20609a"/><path d="M1 9h6M7 9h6M13 9h5M18 6v16" stroke="#fff"/></symbol>
    <symbol id="info" viewBox="0 0 24 24"><circle cx="9" cy="15" r="8" fill="#2f83d4" stroke="#1a5aa0"/><path d="M8 10h3v2H8zM7 14h4v5h1v1H7v-1h1v-4H7z" fill="#fff"/><path d="M9 4q10 0 11 11M10 1q12 0 13 13" fill="none" stroke="#4a88c8" stroke-width="2"/></symbol>
    <symbol id="webdoc" viewBox="0 0 24 24"><path d="M3 1h13l5 5v17H3z" fill="#fff" stroke="#2a6ab8" stroke-width="1.500"/><circle cx="12" cy="14" r="5.500" fill="#3aa06a" stroke="#2a6ab8"/><path d="m12 10 3 6H9z" fill="#fff"/></symbol>
    <symbol id="clock" viewBox="0 0 24 24"><circle cx="12" cy="12" r="10.500" fill="#d8e4f4" stroke="#5a6f8e" stroke-width="2"/><circle cx="12" cy="12" r="7.500" fill="#fff"/><path d="M12 5v8h6" fill="none" stroke="#123" stroke-width="2"/></symbol>
    <symbol id="rainbow" viewBox="0 0 24 24"><path d="M2 1h9v5H2z" fill="#f03a2a"/><path d="M2 5h9v4H2z" fill="#f6a822"/><path d="M2 9h9v4H2z" fill="#e6ea2a"/><path d="M2 13h9v4H2z" fill="#35c845"/><path d="M2 17h9v6H2z" fill="#2463dc"/><path d="m12 6 3 3 1 0 8 12-3 1-7-11z" fill="#222"/></symbol>
    <symbol id="wizard" viewBox="0 0 24 24"><path d="M2 2h8v16H2zM12 6h12l-3 3h-8z" fill="#4a94d8" stroke="#2a5a9a"/><path d="M2 6h8M2 10h8M2 14h8M6 2v16" stroke="#b8dcf8"/><path d="M1 20h10" stroke="#8b3" stroke-width="2"/><path d="m12 10 9 11M11 15l7-5" stroke="#222" stroke-width="2.500"/></symbol>
    <symbol id="roboarm" viewBox="0 0 24 24"><path d="m8 15 3-6 6-5 5-1M9 3l8 1 3 5" fill="none" stroke="#555" stroke-width="2.500"/><path d="M2 19h14v3H2z" fill="#888"/><path d="M5 12h8v7H5z" fill="#aaa" stroke="#555"/><circle cx="4" cy="17" r="3" fill="#f2a73a"/><circle cx="11" cy="20" r="3" fill="#f2a73a"/></symbol>
    <symbol id="palette1" viewBox="0 0 24 24"><path d="M2 3l5-1v20l-5-2z" fill="#f4f4f4" stroke="#666"/><path d="M7 4h16v16H7z" fill="#fff" stroke="#555" stroke-width="1.500"/><path d="M10 7h11v9H10z" fill="#e33a2a"/><path d="M10 12h11v4H10z" fill="#9ac0ea"/><path d="M13 7h5v6h-5z" fill="#fff"/></symbol>
    <symbol id="palette2" viewBox="0 0 24 24"><path d="M2 3l5-1v20l-5-2z" fill="#f4f4f4" stroke="#666"/><path d="M7 4h16v16H7z" fill="#fff" stroke="#555" stroke-width="1.500"/><circle cx="12" cy="8" r="2" fill="#d33"/><circle cx="12" cy="12" r="2" fill="#2a6ac8"/><circle cx="12" cy="16" r="2" fill="#3a3"/><path d="M16 8h5M16 12h5M16 16h5" stroke="#444"/></symbol>

    <!-- part navigator -->
    <symbol id="panelwin" viewBox="0 0 18 18"><path d="M1.500 2.500h15v13h-15z" fill="#fff" stroke="#111"/><path d="M1 1h16v4H1z" fill="#111"/></symbol>
    <symbol id="folder" viewBox="0 0 18 18"><path d="M1 3h6l2 2h6v3H1z" fill="#ffe27a" stroke="#8a5f0c"/><path d="M1 15V5l3 3h13l-4 7z" fill="#f9b62e" stroke="#8a5f0c"/></symbol>
    <symbol id="t-sketch" viewBox="0 0 18 18"><path d="M2 2h5v5H2zM2 10h5v6H2zM10 10h6v6h-6zM10 7h4" fill="none" stroke="#111" stroke-width="1.600"/><path d="m10 8 6-7 2 1-6 7z" fill="#f0a23a" stroke="#a3691c" stroke-width=".6"/></symbol>
    <symbol id="t-extrude" viewBox="0 0 18 18"><path d="m1 3 4-2 6 1 6-1v12l-4 3-4-2-4 2-4-3z" fill="#f59a30" stroke="#a8580c"/><path d="M5 5v9M9 4v10M13 4v10" stroke="#8a3a10"/><path d="M6 5h2v8H6zM10 5h2v8h-2z" fill="#ffd48a"/><path d="m1 14 4 2 4-2 4 2 4-3" fill="none" stroke="#5560a8" stroke-width="1.500"/></symbol>
    <symbol id="t-datum" viewBox="0 0 18 18"><path d="m3 2 11 3v12L3 13z" fill="#fdfdfd" stroke="#666" stroke-width="1.300"/></symbol>
    <symbol id="t-mirror" viewBox="0 0 18 18"><path d="m3 6 7-5 4 3-2 4-6 3z" fill="#f5ae5a" stroke="#a8682a"/><path d="m1 10 6-2 3 4 6-3 1 4-6 4-4-3-5 1z" fill="#7a8be4" stroke="#4450a8"/></symbol>
    <symbol id="t-hole" viewBox="0 0 18 18"><path d="M5 1v11l4 4 4-4V1" fill="#fff" stroke="#222" stroke-width="1.400"/></symbol>
    <symbol id="t-thread" viewBox="0 0 18 18"><path d="M6 1v12l3 3 3-3V1z" fill="#a9bbe2" stroke="#445a98"/><path d="M3 1v13M15 1v13" stroke="#222" stroke-width="1.500" stroke-dasharray="2 1.500"/></symbol>
    <symbol id="t-revolve" viewBox="0 0 18 18"><path d="M1 7q2-6 8-6t8 6l-4 4v5l-4 1-4-1v-5z" fill="#f5a02e" stroke="#622"/><path d="M1 7q2-6 8-6v16l-4-1v-5z" fill="#3a48b8"/><path d="M9 1v16" stroke="#d22" stroke-width="2"/><path d="M9 4h4v5H9z" fill="#ffe27a"/></symbol>
    <symbol id="prt" viewBox="0 0 18 18"><path d="m2 6 3-2v6l6-2 5 2v4l-6 3-8-3z" fill="#1d4fc0" stroke="#0e2f86"/><path d="m6 3 5-2 1 5-5 3z" fill="#dceafc"/><path d="m5 13 5 2 6-3" fill="none" stroke="#8ab0f0"/></symbol>
    <symbol id="pin" viewBox="0 0 14 14"><path d="M2 2h7l3 3v3l-2 4H2z" fill="none" stroke="#fff" stroke-width="1.800"/><path d="m6 7 3 2 3-4" fill="none" stroke="#fff" stroke-width="1.500"/></symbol>
    <symbol id="tabx" viewBox="0 0 14 14"><path d="m3 3 8 8M11 3l-8 8" stroke="#fff" stroke-width="2.500"/></symbol>

    <!-- right border bar -->
    <symbol id="r-surf" viewBox="0 0 24 24"><path d="m1 12 10-8 12 6-10 10z" fill="#a6dcb6" stroke="#3f8a5a"/><path d="m5 9 12 6M8 6l12 6M5 15l11-9M9 17l11-9" fill="none" stroke="#3f8a5a"/></symbol>
    <symbol id="r-trim" viewBox="0 0 24 24"><path d="m8 3-2 9-5 3 4 6h9l5-8z" fill="#b8ccf4" stroke="#7088c8"/><path d="m8 3 13 9M12 4l11-3M12 3l10 8" fill="none" stroke="#c24a4a" stroke-width="1.300"/></symbol>
    <symbol id="r-thick" viewBox="0 0 24 24"><path d="M6 2h14v14H6z" fill="#f6d37c" stroke="#c28a34"/><path d="m1 18 6-4h16v6H6z" fill="#f4a640" stroke="#b8742a"/><path d="M12 2v14M6 16l6-2 8 4" fill="none" stroke="#b8442a"/></symbol>
    <symbol id="r-off" viewBox="0 0 24 24"><path d="m1 13q8-7 16-6v6Q9 13 2 18z" fill="#dfe8a8" stroke="#98a"/><path d="m1 10q8-6 16-5v4Q8 9 2 15z" fill="#b6c6ee" stroke="#7a88b8"/><path d="M21 3v5M19 5h4M21 14v6l-2-3" stroke="#d2552a" stroke-width="2" fill="none"/></symbol>
    <symbol id="r-plan" viewBox="0 0 24 24"><path d="M4 5h17l2 14H1z" fill="#fff" stroke="#555" stroke-width="1.500"/><path d="M6 16v-5h5V8h7v4h-4v4z" fill="none" stroke="#334a80" stroke-width="1.500"/></symbol>
    <symbol id="s-grid" viewBox="0 0 18 18"><path d="M1 2h16v14H1z" fill="#d4d4d4" stroke="#aaa"/><path d="m3 5 3 3 4-3 5 4M3 12l4-3 4 4 4-4M5 4v10M9 4v10M13 4v10" fill="none" stroke="#999"/></symbol>
    <symbol id="s-pie" viewBox="0 0 18 18"><ellipse cx="9" cy="11" rx="8" ry="5.500" fill="#1f7ab8"/><ellipse cx="9" cy="8" rx="8" ry="5.500" fill="#35a04a"/><path d="M9 8 3 4q6-3 10 0z" fill="#d8402a"/><path d="m9 8 8-1q0 3-4 5z" fill="#58b8e8"/></symbol>
  </svg>

  <header class="title-bar">
    <div class="quick-access">
      <span class="nx-logo">NX</span>
      <span class="sep"></span>
      <button class="ic" aria-label="Save"><svg><use href="#save"/></svg></button>
      <span class="sep"></span>
      <button class="ic" aria-label="Undo"><svg><use href="#undo"/></svg></button>
      <button class="drop off" aria-label="Undo list"></button>
      <button class="ic" aria-label="Redo"><svg><use href="#redo"/></svg></button>
      <span class="sep"></span>
      <button class="ic" aria-label="Cut"><svg><use href="#cut"/></svg></button>
      <button class="ic" aria-label="Copy"><svg><use href="#copy"/></svg></button>
      <button class="ic" aria-label="Paste"><svg><use href="#paste"/></svg></button>
      <button class="ic" aria-label="Repeat"><svg><use href="#target"/></svg></button>
      <span class="sep"></span>
      <button class="ic" aria-label="Curve"><svg><use href="#curve"/></svg></button>
      <button class="drop" aria-label="Curve list"></button>
      <span class="sep"></span>
      <button class="ic" aria-label="Touch mode"><svg><use href="#eraser"/></svg></button>
      <span class="sep"></span>
      <button class="text-btn"><svg><use href="#switchwin"/></svg>Switch Window</button>
      <button class="text-btn"><svg><use href="#win"/></svg>Window<i class="caret"></i></button>
      <button class="ic tiny" aria-label="Customize"><svg><use href="#custom"/></svg></button>
    </div>
    <h1 class="app-title">NX 12 - Modeling</h1>
    <span class="siemens">SIEMENS</span>
    <div class="win-controls">
      <button aria-label="Minimize"><svg><use href="#minimize"/></svg></button>
      <button aria-label="Restore"><svg><use href="#restore"/></svg></button>
      <button aria-label="Close"><svg><use href="#close"/></svg></button>
    </div>
    <div class="progress"></div>
  </header>

  <nav class="tabs">
    <a href="#" class="file">File</a>
    <a href="#" class="active">Home</a>
    <a href="#">Assemblies</a>
    <a href="#">Curve</a>
    <a href="#">Surface</a>
    <a href="#">Analysis</a>
    <a href="#">View</a>
    <a href="#">Render</a>
    <a href="#">Tools</a>
    <a href="#">PMI</a>
    <a href="#">Application</a>
    <a href="#">Animation Designer</a>
    <div class="tab-tools">
      <label class="find"><input type="text" placeholder="Find a Command" aria-label="Find a Command"><svg><use href="#search"/></svg></label>
      <button class="ic" aria-label="Full screen"><svg><use href="#full"/></svg></button>
      <button class="ic" aria-label="Minimize ribbon"><svg><use href="#collapse"/></svg></button>
      <button class="ic" aria-label="Help"><svg><use href="#help"/></svg></button>
    </div>
  </nav>

  <section class="ribbon">
    <div class="group g-sketch">
      <div class="group-body">
        <button class="big"><svg><use href="#sketch"/></svg><span>Sketch</span></button>
        <div class="gallery">
          <button aria-label="Profile"><svg><use href="#profile"/></svg></button>
          <button aria-label="Rectangle"><svg><use href="#rect"/></svg></button>
          <button aria-label="Line"><svg><use href="#line"/></svg></button>
          <button aria-label="Arc"><svg><use href="#arc"/></svg></button>
        </div>
        <div class="gallery-nav">
          <button class="up" aria-label="Up"><i class="caret"></i></button>
          <button aria-label="Down"><i class="caret"></i></button>
          <button aria-label="Expand"><svg><use href="#custom"/></svg></button>
        </div>
      </div>
      <div class="group-foot"><span>Direct Sketch</span><button class="drop" aria-label="Options"></button></div>
    </div>

    <div class="group g-feature">
      <div class="group-body">
        <button class="big"><svg><use href="#datum"/></svg><span>Datum</span><span>Plane<i class="caret"></i></span></button>
        <button class="big"><svg><use href="#extrude"/></svg><span>Extrude</span><span><i class="caret"></i></span></button>
        <button class="big"><svg><use href="#hole"/></svg><span>Hole</span></button>
        <div class="stack">
          <button><svg><use href="#pattern"/></svg>Pattern Feature</button>
          <button><svg><use href="#unite"/></svg>Unite<i class="caret"></i></button>
          <button><svg><use href="#shell"/></svg>Shell</button>
        </div>
        <button class="big"><svg><use href="#blend"/></svg><span>Edge</span><span>Blend<i class="caret"></i></span></button>
        <div class="stack">
          <button><svg><use href="#chamfer"/></svg>Chamfer</button>
          <button><svg><use href="#trim"/></svg>Trim Body</button>
          <button><svg><use href="#draft"/></svg>Draft</button>
        </div>
        <button class="big more"><svg><use href="#boss"/></svg><span>More</span><span><i class="caret"></i></span></button>
      </div>
      <div class="group-foot"><span>Feature</span><button class="drop" aria-label="Options"></button></div>
    </div>

    <div class="group g-sync">
      <div class="group-body">
        <button class="big"><svg><use href="#moveface"/></svg><span>Move</span><span>Face</span></button>
        <div class="stack">
          <button aria-label="Copy face"><svg><use href="#facecopy"/></svg></button>
          <button aria-label="Offset region"><svg><use href="#faceoff"/></svg></button>
          <button aria-label="Delete face"><svg><use href="#facedel"/></svg></button>
        </div>
        <button class="big more"><svg><use href="#swap"/></svg><span>More</span><span><i class="caret"></i></span></button>
      </div>
      <div class="group-foot"><span>Synchronous...</span><button class="drop" aria-label="Options"></button></div>
    </div>

    <div class="group g-std">
      <div class="rows">
        <div>
          <button class="ic" aria-label="Attributes"><svg><use href="#gcframe"/></svg></button>
          <button class="ic" aria-label="Layers"><svg><use href="#layers"/></svg></button>
          <button class="ic" aria-label="Layer table"><svg><use href="#laytab"/></svg></button>
          <span class="sep"></span>
          <button class="ic" aria-label="Note"><svg><use href="#note"/></svg></button>
        </div>
        <div>
          <button class="ic" aria-label="Check part"><svg><use href="#cubechk"/></svg></button>
          <button class="ic" aria-label="Check drawing"><svg><use href="#wirechk"/></svg></button>
          <button class="ic" aria-label="Check assembly"><svg><use href="#boxchk"/></svg></button>
          <span class="sep"></span>
          <button class="ic" aria-label="Export"><svg><use href="#robot"/></svg></button>
        </div>
      </div>
      <div class="group-foot"><span>Standar...</span><button class="drop" aria-label="Options"></button></div>
    </div>

    <div class="group g-gear">
      <div class="rows">
        <div>
          <button class="ic" aria-label="Cylinder gear"><svg><use href="#gear1"/></svg></button>
          <button class="ic" aria-label="Bevel gear"><svg><use href="#gear2"/></svg></button>
        </div>
        <div><button class="ic" aria-label="Gear drawing"><svg><use href="#gear3"/></svg></button></div>
      </div>
      <div class="group-foot"><span>G...</span><button class="drop" aria-label="Options"></button></div>
    </div>

    <div class="group g-spring">
      <div class="rows">
        <div>
          <button class="ic" aria-label="Compression spring"><svg><use href="#coil"/></svg></button>
          <button class="ic" aria-label="Tension spring"><svg><use href="#coil2"/></svg></button>
        </div>
        <div>
          <button class="ic" aria-label="Disk spring"><svg><use href="#bearing"/></svg></button>
          <span class="sep"></span>
          <button class="ic" aria-label="Delete spring"><svg><use href="#coildel"/></svg></button>
        </div>
      </div>
      <div class="group-foot"><span>Sp...</span><button class="drop" aria-label="Options"></button></div>
    </div>

    <div class="group g-mach">
      <div class="rows">
        <div>
          <button class="ic" aria-label="Validate"><svg><use href="#mchk"/></svg></button>
          <button class="ic" aria-label="Arrange"><svg><use href="#mstack"/></svg></button>
        </div>
        <div>
          <button class="ic" aria-label="Table"><svg><use href="#mtab"/></svg></button>
          <button class="ic" aria-label="Coordinate system"><svg><use href="#csys"/></svg></button>
        </div>
      </div>
      <div class="group-foot"><span>M...</span><button class="drop" aria-label="Options"></button></div>
    </div>

    <div class="group g-model">
      <div class="rows">
        <div>
          <button class="ic" aria-label="Triangle"><svg><use href="#tri"/></svg></button>
          <button class="ic" aria-label="Table"><svg><use href="#tabtri"/></svg></button>
          <button class="ic" aria-label="Grid folder"><svg><use href="#foldhash"/></svg></button>
          <button class="ic" aria-label="Hole folder"><svg><use href="#foldring"/></svg></button>
        </div>
        <div>
          <button class="ic" aria-label="Card"><svg><use href="#card"/></svg></button>
          <button class="ic" aria-label="Dimension"><svg><use href="#dimbrush"/></svg></button>
          <span class="sep"></span>
          <button class="ic" aria-label="Find fit"><svg><use href="#find"/></svg></button>
        </div>
      </div>
      <div class="group-foot"><span>Modeli...</span><button class="drop" aria-label="Options"></button></div>
    </div>

    <div class="group g-dot">
      <div class="rows">
        <div><button class="ic" aria-label="Blocks"><svg><use href="#cubes"/></svg></button></div>
        <div><button class="ic" aria-label="Blocks"><svg><use href="#cubes"/></svg></button></div>
      </div>
      <div class="group-foot"><span>.</span><button class="drop" aria-label="Options"></button></div>
    </div>

    <div class="group g-dim">
      <div class="rows">
        <div>
          <button class="ic" aria-label="Dimension style"><svg><use href="#dimrect"/></svg></button>
          <span class="sep"></span>
          <button class="ic" aria-label="No tolerance"><svg><use href="#xx"/></svg></button>
          <button class="ic" aria-label="Equal tolerance"><svg><use href="#tol1"/></svg></button>
          <button class="ic" aria-label="Bilateral tolerance"><svg><use href="#tol2"/></svg></button>
          <button class="ic" aria-label="Upper tolerance"><svg><use href="#tol3"/></svg></button>
          <button class="ic" aria-label="Lower tolerance"><svg><use href="#tol3"/></svg></button>
          <button class="ic" aria-label="Basic"><svg><use href="#xbox"/></svg></button>
          <button class="ic" aria-label="Reference"><svg><use href="#xpar"/></svg></button>
          <button class="ic" aria-label="Fit"><svg><use href="#fit1"/></svg></button>
          <button class="ic" aria-label="Fit limits"><svg><use href="#fit2"/></svg></button>
          <button class="ic" aria-label="Fit tolerance"><svg><use href="#fit2"/></svg></button>
          <button class="ic" aria-label="Fit size"><svg><use href="#fit3"/></svg></button>
        </div>
        <div>
          <button class="ic" aria-label="Angle text"><svg><use href="#redslash"/></svg></button>
          <button class="ic" aria-label="Leader text"><svg><use href="#rednote"/></svg></button>
          <span class="sep"></span>
          <button class="ic" aria-label="Diameter"><svg><use href="#dia"/></svg></button>
          <button class="ic" aria-label="Diameter leader"><svg><use href="#dia2"/></svg></button>
          <button class="ic" aria-label="Restore"><svg><use href="#back"/></svg></button>
        </div>
      </div>
      <div class="group-foot"><span>Dimension Style - GC Toolkits</span><button class="drop" aria-label="Options"></button></div>
    </div>

    <div class="group g-surf">
      <div class="group-body">
        <button class="big"><svg><use href="#surface"/></svg><span>Surface</span><span><i class="caret"></i></span></button>
      </div>
    </div>

    <div class="group g-asm">
      <div class="group-body">
        <div class="asm-list">
          <button class="off"><svg><use href="#workasm"/></svg>Work on Assembly</button>
          <button><svg><use href="#addasm"/></svg>Add<i class="caret"></i></button>
        </div>
        <div class="stack">
          <button aria-label="Mirror assembly"><svg><use href="#mirrorasm"/></svg></button>
          <button aria-label="Move component"><svg><use href="#moveasm"/></svg></button>
          <button aria-label="Assembly constraints"><svg><use href="#conasm"/></svg></button>
        </div>
      </div>
      <div class="group-foot"><span>Assemblies</span><button class="drop" aria-label="Options"></button></div>
    </div>
    <div class="ribbon-end"><button class="drop" aria-label="Ribbon options"></button></div>
  </section>

  <section class="selection-bar">
    <button class="text-btn"><svg><use href="#menu"/></svg><span><u>M</u>enu</span><i class="caret"></i></button>
    <span class="sep"></span>
    <div class="select s-type"><select aria-label="Type filter"><option>No Selection Filter</option></select></div>
    <div class="select s-scope"><select aria-label="Selection scope"><option>Entire Assembly</option></select></div>
    <div class="icons">
      <button class="ic" aria-label="Scope"><svg><use href="#gr1"/></svg></button>
      <button class="ic" aria-label="Filter"><svg><use href="#gr2"/></svg></button>
      <button class="ic" aria-label="General filter"><svg><use href="#selfilt"/></svg></button>
      <button class="drop" aria-label="Filter list"></button>
      <button class="ic" aria-label="Restore selection"><svg><use href="#gr3"/></svg></button>
      <button class="ic" aria-label="Deselect"><svg><use href="#gr4"/></svg></button>
      <button class="ic" aria-label="Find in navigator"><svg><use href="#pick"/></svg></button>
      <button class="ic" aria-label="Rectangle select"><svg><use href="#marquee"/></svg></button>
      <button class="drop" aria-label="Select list"></button>
      <button class="ic" aria-label="Wireframe selection"><svg><use href="#bodyred"/></svg></button>
      <button class="ic" aria-label="Solid selection"><svg><use href="#cube"/></svg></button>
      <button class="ic on" aria-label="Snap point"><svg><use href="#snap"/></svg></button>
      <button class="ic on" aria-label="End point"><svg><use href="#sn-end"/></svg></button>
      <button class="ic on" aria-label="Mid point"><svg><use href="#sn-mid"/></svg></button>
      <button class="ic" aria-label="Control point"><svg><use href="#sn-ctrl"/></svg></button>
      <button class="ic on" aria-label="Pole"><svg><use href="#sn-pole"/></svg></button>
      <button class="ic on" aria-label="Spline point"><svg><use href="#sn-spl"/></svg></button>
      <button class="ic" aria-label="Intersection"><svg><use href="#sn-int"/></svg></button>
      <button class="ic on" aria-label="Arc center"><svg><use href="#sn-cen"/></svg></button>
      <button class="ic" aria-label="Quadrant"><svg><use href="#sn-quad"/></svg></button>
      <button class="ic on" aria-label="Existing point"><svg><use href="#sn-pt"/></svg></button>
      <button class="ic on" aria-label="Point on curve"><svg><use href="#sn-on"/></svg></button>
      <button class="ic" aria-label="Point on face"><svg><use href="#sn-face"/></svg></button>
      <button class="ic" aria-label="Facet vertex"><svg><use href="#sn-mesh"/></svg></button>
      <button class="ic" aria-label="Grid point"><svg><use href="#sn-grid"/></svg></button>
      <span class="sep"></span>
      <button class="ic" aria-label="Fit"><svg><use href="#zoomfit"/></svg></button>
      <button class="ic" aria-label="Zoom"><svg><use href="#zoomwin"/></svg></button>
      <button class="ic" aria-label="Rotate"><svg><use href="#rotate"/></svg></button>
      <button class="ic" aria-label="Edit section"><svg><use href="#pen"/></svg></button>
      <button class="ic" aria-label="Sheets"><svg><use href="#sheets"/></svg></button>
      <button class="ic" aria-label="Layout"><svg><use href="#wintab"/></svg></button>
      <button class="drop" aria-label="Layout list"></button>
      <button class="ic" aria-label="Rendering style"><svg><use href="#shade"/></svg></button>
      <button class="drop" aria-label="Rendering list"></button>
      <button class="ic" aria-label="Orient view"><svg><use href="#bluecube"/></svg></button>
      <button class="drop" aria-label="Orient list"></button>
      <button class="ic" aria-label="Show and hide"><svg><use href="#play"/></svg></button>
      <button class="drop" aria-label="Show list"></button>
      <span class="sep"></span>
      <button class="ic" aria-label="Snap"><svg><use href="#magnet"/></svg></button>
      <button class="ic" aria-label="Points"><svg><use href="#gpts"/></svg></button>
      <button class="ic" aria-label="Step"><svg><use href="#gstep"/></svg></button>
      <button class="ic" aria-label="Split"><svg><use href="#gsplit"/></svg></button>
      <button class="ic" aria-label="Face analysis"><svg><use href="#green"/></svg></button>
      <button class="drop" aria-label="Analysis list"></button>
      <button class="ic" aria-label="Mesh"><svg><use href="#redmesh"/></svg></button>
      <span class="sep"></span>
    </div>
    <button class="drop bar-end" aria-label="Bar options"></button>
  </section>

  <main class="workspace">
    <nav class="resource-bar">
      <button class="small" aria-label="Settings"><svg><use href="#cog"/></svg></button>
      <button aria-label="Roles"><svg><use href="#cogs"/></svg></button>
      <button aria-label="Assembly Navigator"><svg><use href="#asmnav"/></svg></button>
      <button aria-label="Constraint Navigator"><svg><use href="#conflict"/></svg></button>
      <button class="active" aria-label="Part Navigator"><svg><use href="#partnav"/></svg></button>
      <button aria-label="Reuse Library"><svg><use href="#books"/></svg></button>
      <button class="apart" aria-label="HD3D Tools"><svg><use href="#info"/></svg></button>
      <button class="apart" aria-label="Web Browser"><svg><use href="#webdoc"/></svg></button>
      <button class="apart" aria-label="History"><svg><use href="#clock"/></svg></button>
      <button aria-label="System Materials"><svg><use href="#rainbow"/></svg></button>
      <button aria-label="Process Studio"><svg><use href="#wizard"/></svg></button>
      <button aria-label="Manufacturing"><svg><use href="#roboarm"/></svg></button>
      <button aria-label="Scenes"><svg><use href="#palette1"/></svg></button>
      <button aria-label="Templates"><svg><use href="#palette2"/></svg></button>
    </nav>

    <aside class="navigator">
      <div class="nav-title"><h2>Part Navigator</h2><button aria-label="Undock"><svg><use href="#panelwin"/></svg></button></div>
      <div class="tree-box">
        <div class="tree-head"><span>Name</span><i class="sort"></i></div>
        <div class="tree-view">
          <ul class="tree">
            <li class="root"><button class="toggle" aria-label="Collapse">&minus;</button><svg><use href="#folder"/></svg>Model History</li>
            <li class="off"><span class="twig"></span><label><input type="checkbox" checked><svg><use href="#csys"/></svg>Datum Coordinate System (0)</label></li>
            <li class="off"><span class="twig"></span><label><input type="checkbox" checked><svg><use href="#t-sketch"/></svg>Sketch (1) "SKETCH_000"</label></li>
            <li><span class="twig"></span><label><input type="checkbox" checked><svg><use href="#t-extrude"/></svg>Extrude (2)</label></li>
            <li class="off"><span class="twig"></span><label><input type="checkbox" checked><svg><use href="#t-sketch"/></svg>Sketch (3) "SKETCH_001"</label></li>
            <li><span class="twig"></span><label><input type="checkbox" checked><svg><use href="#t-extrude"/></svg>Extrude (4)</label></li>
            <li class="off"><span class="twig"></span><label><input type="checkbox" checked><svg><use href="#t-datum"/></svg>Datum Plane (5)</label></li>
            <li class="off"><span class="twig"></span><label><input type="checkbox" checked><svg><use href="#t-sketch"/></svg>Sketch (6) "SKETCH_002"</label></li>
            <li><span class="twig"></span><label><input type="checkbox" checked><svg><use href="#t-extrude"/></svg>Extrude (7)</label></li>
            <li class="off"><span class="twig"></span><label><input type="checkbox" checked><svg><use href="#t-sketch"/></svg>Sketch (8) "SKETCH_003"</label></li>
            <li><span class="twig"></span><label><input type="checkbox" checked><svg><use href="#t-extrude"/></svg>Extrude (9)</label></li>
            <li><span class="twig"></span><label><input type="checkbox" checked><svg><use href="#t-mirror"/></svg>Mirror Feature (10)</label></li>
            <li><span class="twig"></span><label><input type="checkbox" checked><svg><use href="#unite"/></svg>Unite (11)</label></li>
            <li><span class="twig"></span><label><input type="checkbox" checked><svg><use href="#t-hole"/></svg>Simple Hole (12)</label></li>
            <li><span class="twig"></span><label><input type="checkbox" checked><svg><use href="#t-hole"/></svg>Simple Hole (13)</label></li>
            <li><span class="twig"></span><label><input type="checkbox" checked><svg><use href="#t-thread"/></svg>Threaded Hole (14)</label></li>
            <li><span class="twig"><button class="toggle" aria-label="Expand">+</button></span><label><input type="checkbox" checked><svg><use href="#pattern"/></svg>Pattern Feature [Linear] (15)</label></li>
            <li><span class="twig"></span><label><input type="checkbox" checked><svg><use href="#t-thread"/></svg>Threaded Hole (16)</label></li>
            <li><span class="twig"><button class="toggle" aria-label="Expand">+</button></span><label><input type="checkbox" checked><svg><use href="#pattern"/></svg>Pattern Feature [Circular] (17)</label></li>
            <li><span class="twig"></span><label><input type="checkbox" checked><svg><use href="#t-mirror"/></svg>Mirror Feature (18)</label></li>
            <li><span class="twig"></span><label><input type="checkbox" checked><svg><use href="#blend"/></svg>Edge Blend (19)</label></li>
            <li><span class="twig"></span><label><input type="checkbox" checked><svg><use href="#chamfer"/></svg>Chamfer (20)</label></li>
            <li class="off"><span class="twig"></span><label><input type="checkbox" checked><svg><use href="#t-sketch"/></svg>Sketch (21) "SKETCH_007"</label></li>
            <li><span class="twig"></span><label><input type="checkbox" checked><svg><use href="#t-revolve"/></svg>Revolve (22)</label></li>
          </ul>
          <div class="v-scroll">
            <button class="chev up" aria-label="Scroll up"></button>
            <div class="track"><div class="thumb"></div></div>
            <button class="chev down" aria-label="Scroll down"></button>
          </div>
        </div>
        <div class="h-scroll">
          <button class="chev left" aria-label="Scroll left"></button>
          <div class="track"><div class="thumb"></div></div>
          <button class="chev right" aria-label="Scroll right"></button>
        </div>
      </div>
    </aside>

    <section class="document">
      <div class="doc-tabs">
        <div class="doc-tab">
          <svg><use href="#prt"/></svg>
          <span>NX06 1 T-TYPE STRAIGHT FLANGE.prt</span>
          <svg class="sm"><use href="#pin"/></svg>
          <button aria-label="Close tab"><svg class="sm"><use href="#tabx"/></svg></button>
        </div>
      </div>
      <div class="viewport">
        <svg viewBox="409 259 1475 733">
          <defs>
            <linearGradient id="cyl"><stop offset="0" stop-color="#484848"/><stop offset=".16" stop-color="#4f4f4f"/><stop offset=".34" stop-color="#696969"/><stop offset=".5" stop-color="#6b6b6b"/><stop offset=".62" stop-color="#757575"/><stop offset=".72" stop-color="#737373"/><stop offset=".84" stop-color="#606060"/><stop offset="1" stop-color="#5b5b5b"/></linearGradient>
            <linearGradient id="pipe" gradientUnits="userSpaceOnUse" x1="0" y1="476" x2="0" y2="775"><stop offset="0" stop-color="#727272"/><stop offset=".15" stop-color="#808080"/><stop offset=".33" stop-color="#8d8d8d"/><stop offset=".5" stop-color="#6c6c6c"/><stop offset=".68" stop-color="#494949"/><stop offset=".84" stop-color="#292929"/><stop offset="1" stop-color="#272727"/></linearGradient>
            <linearGradient id="disc" gradientUnits="userSpaceOnUse" x1="0" y1="438" x2="0" y2="813"><stop offset="0" stop-color="#727272"/><stop offset=".13" stop-color="#858585"/><stop offset=".15" stop-color="#6d6d6d"/><stop offset=".85" stop-color="#6b6b6b"/><stop offset=".86" stop-color="#555"/><stop offset=".98" stop-color="#282828"/></linearGradient>
            <linearGradient id="lip" x1="0" y1="0" x2="0" y2="1"><stop offset="0" stop-color="#555" stop-opacity="0"/><stop offset="1" stop-color="#222"/></linearGradient>
            <linearGradient id="neck" x1="0" y1="0" x2="0" y2="1"><stop offset="0" stop-color="#262626"/><stop offset="1" stop-color="#555" stop-opacity=".2"/></linearGradient>
            <linearGradient id="liptop" x1="0" y1="0" x2="0" y2="1"><stop offset="0" stop-color="#fff" stop-opacity=".05"/><stop offset="1" stop-color="#fff" stop-opacity=".14"/></linearGradient>
            <linearGradient id="side"><stop offset="0" stop-color="#fff" stop-opacity="0"/><stop offset=".4" stop-color="#fff" stop-opacity=".25"/><stop offset="1" stop-color="#000" stop-opacity=".25"/></linearGradient>
            <linearGradient id="hub" gradientUnits="userSpaceOnUse" x1="0" y1="476" x2="0" y2="775"><stop offset="0" stop-color="#686868"/><stop offset=".35" stop-color="#9c9c9c"/><stop offset=".6" stop-color="#6c6c6c"/><stop offset=".85" stop-color="#303030"/></linearGradient>
            <linearGradient id="webl" gradientUnits="userSpaceOnUse" x1="950" y1="468" x2="1109" y2="625"><stop offset="0" stop-color="#6a6a6a"/><stop offset=".5" stop-color="#a0a0a0"/><stop offset="1" stop-color="#777"/></linearGradient>
            <linearGradient id="webr" gradientUnits="userSpaceOnUse" x1="1268" y1="468" x2="1110" y2="625"><stop offset="0" stop-color="#6a6a6a"/><stop offset=".5" stop-color="#b0b0b0"/><stop offset="1" stop-color="#777"/></linearGradient>
            <linearGradient id="webd" gradientUnits="userSpaceOnUse" x1="0" y1="625" x2="0" y2="788"><stop offset="0" stop-color="#636363"/><stop offset="1" stop-color="#333"/></linearGradient>
            <radialGradient id="glow"><stop offset="0" stop-color="#fff" stop-opacity=".45"/><stop offset="1" stop-color="#fff" stop-opacity="0"/></radialGradient>
          </defs>

          <!-- vertical body -->
          <path d="M944 363h329q-15 0-15 15v494q0 15 15 15H944q15 0 15-15V378q0-15-15-15z" fill="url(#cyl)"/>
          <path d="M954 363h309q-5 5-5 15H959q0-10-5-15z" fill="url(#neck)"/>
          <ellipse cx="1062" cy="877" rx="55" ry="6" fill="url(#glow)" opacity=".7"/>
          <ellipse cx="1161" cy="877" rx="55" ry="7" fill="url(#glow)"/>

          <!-- horizontal pipe -->
          <path d="M851 461q0 15 15 15h80l163.500 149L959 788q0-13-15-13h-78q-15 0-15 15z" fill="url(#pipe)"/>
          <path d="M1506 476h-235l-161.500 149L1258 788q0-13 15-13h233z" fill="url(#pipe)"/>
          <path d="M944 476q15 0 15-15l150.500 164z" fill="url(#webl)"/>
          <path d="M1273 476q-15 0-15-15l-148.500 164z" fill="url(#webr)"/>
          <path d="M950 776q9 2 9 14l150.500-165zM1267 776q-9 2-9 14l-148.500-165z" fill="url(#webd)"/>
          <path d="M946 476 1109.500 625 1271 476M959 463l150.500 162L1258 463M959 788l150.500-163L1258 788" class="edge"/>

          <!-- left flange -->
          <path d="M790 438h46q15 0 15 20v335q0 20-15 20h-46z" fill="url(#disc)"/>
          <path d="M836 438q15 0 15 20v335q0 20-15 20z" fill="url(#side)"/>
          <path d="M851 461q0 15 14 15v299q-14 0-14 15z" fill="url(#hub)"/>
          <path d="M790 438v375M790 438h46M836 438v350M790 494h61M790 756h61M851 458v335M865 476v220M866 476h80M1271 476h235v299h-235" class="edge"/>
          <path d="M852 510q4 10 13 10" class="edge"/>

          <!-- top flange -->
          <rect x="828" y="288" width="561" height="75" rx="16" fill="url(#cyl)"/>
          <path d="M844 288h529q12 1 16 15H828q4-14 16-15z" fill="url(#liptop)"/>
          <ellipse cx="1010" cy="297" rx="110" ry="6" fill="url(#glow)" opacity=".5"/>
          <ellipse cx="1208" cy="298" rx="100" ry="6" fill="url(#glow)"/>
          <path d="M828 348h561q-2 14-16 15.500H844q-14-1-16-15.500z" fill="url(#lip)"/>
          <path d="M828 303h561M828 348h561M844 288h529M959 378h299" class="edge"/>

          <!-- bottom flange -->
          <rect x="828" y="887" width="561" height="76" rx="16" fill="url(#cyl)"/>
          <path d="M844 887h529q12 1 16 15H828q4-14 16-15z" fill="url(#liptop)"/>
          <ellipse cx="1010" cy="897" rx="110" ry="6" fill="url(#glow)" opacity=".5"/>
          <ellipse cx="1208" cy="898" rx="100" ry="6" fill="url(#glow)"/>
          <path d="M828 947h561q-2 14-16 16H844q-14-1-16-16z" fill="url(#lip)"/>
          <path d="M828 902h561M828 947h561M844 887h529M959 872h299" class="edge"/>

          <!-- triad -->
          <path d="M471 931h24v24h-24z" fill="#ccc" stroke="#aaa"/>
          <path d="M470 931h30" stroke="#3f9c46" stroke-width="3"/><path d="m496 926 16 5-16 5z" fill="#3f9c46"/>
          <path d="M470 931v32" stroke="#b63a34" stroke-width="3"/><path d="m465 957 5 13 5-13z" fill="#b63a34"/>
          <path d="M466 926h8v8h-8z" fill="#1d48c8"/>
          <text x="511" y="936" class="axis y">Y</text>
          <text x="470" y="981" class="axis x">X</text>

          <text class="mark" x="578" y="534"><tspan class="cjk">莫西网</tspan>www.3dmox.com</text>
        </svg>
      </div>
    </section>

    <aside class="border-bar">
      <button aria-label="Surface"><svg><use href="#r-surf"/></svg></button>
      <button class="drop" aria-label="Surface list"></button>
      <button aria-label="Trim"><svg><use href="#r-trim"/></svg></button>
      <button aria-label="Thicken"><svg><use href="#r-thick"/></svg></button>
      <button aria-label="Offset"><svg><use href="#r-off"/></svg></button>
      <button aria-label="Plan"><svg><use href="#r-plan"/></svg></button>
      <button class="fold" aria-label="Hide bar"></button>
    </aside>
  </main>

  <footer class="status-bar">
    <p>Select objects and use MB3, or double-click an object</p>
    <div>
      <button class="ic" aria-label="Grid"><svg><use href="#s-grid"/></svg></button>
      <button class="ic" aria-label="Full screen"><svg><use href="#full"/></svg></button>
      <button class="ic" aria-label="Performance"><svg><use href="#s-pie"/></svg></button>
    </div>
  </footer>

</body>
</html>
```

FILE: styles.css
```css
* {
  box-sizing: border-box;
}

body {
  margin: 0;
  height: 100vh;
  display: flex;
  flex-direction: column;
  overflow: hidden;
  font-family: "Open Sans", "Noto Sans", sans-serif;
  font-size: 16px;
  color: #262626;
  background-color: #fff;
}

button {
  display: flex;
  align-items: center;
  justify-content: center;
  margin: 0;
  padding: 0;
  border: none;
  background: none;
  font: inherit;
  color: inherit;
  cursor: pointer;
  flex: none;
}

svg {
  display: block;
  flex: none;
}

.sprite {
  display: none;
}

symbol text {
  font-family: "Liberation Sans", sans-serif;
}

.ic {
  width: 22px;
  height: 22px;
}

.ic svg,
.text-btn svg {
  width: 18px;
  height: 18px;
}

.caret,
.drop::before {
  content: "";
  width: 0;
  height: 0;
  border: 4px solid transparent;
  border-top: 4px solid #222;
  border-bottom: none;
}

.drop {
  width: 12px;
  height: 20px;
}

.drop.off::before {
  border-top-color: #bbb;
}

.sep {
  width: 1px;
  align-self: stretch;
  background-color: #d6d6d6;
}

.text-btn {
  gap: 3px;
  white-space: nowrap;
}

/* Title bar */
.title-bar {
  position: relative;
  display: flex;
  align-items: center;
  height: 34px;
  flex: none;
}

.quick-access {
  display: flex;
  align-items: center;
  gap: 2px;
  height: 34px;
}

.quick-access .sep {
  margin: 0 1px;
}

.quick-access .text-btn {
  margin-left: 2px;
}

.nx-logo {
  width: 47px;
  padding-left: 4px;
  font-size: 26px;
  font-weight: bold;
  line-height: 34px;
  color: #8496a5;
}

.tiny svg {
  width: 10px;
  height: 10px;
}

.app-title {
  flex: 1;
  margin: 0;
  font-size: 17px;
  font-weight: normal;
  text-align: center;
}

.siemens {
  font-size: 17px;
  font-weight: bold;
  color: #128a87;
}

.win-controls {
  display: flex;
  gap: 20px;
  padding: 0 8px 0 32px;
}

.win-controls svg {
  width: 14px;
  height: 14px;
}

.progress {
  position: absolute;
  top: 0;
  left: 779px;
  width: 72px;
  height: 2px;
  background-color: #1272be;
}

/* Ribbon tabs */
.tabs {
  display: flex;
  height: 38px;
  flex: none;
  background-color: #dbdbdb;
}

.tabs a {
  padding: 0 13px;
  font-size: 20px;
  line-height: 40px;
  color: #262626;
  text-decoration: none;
  white-space: nowrap;
}

.tabs .file {
  width: 71px;
  margin-right: 2px;
  padding: 0;
  text-align: center;
  color: #fff;
  background-color: #509fb6;
}

.tabs .active {
  width: 82px;
  padding: 0;
  text-align: center;
  color: #1c6c80;
  background-color: #fff;
}

.tab-tools {
  display: flex;
  align-items: center;
  gap: 4px;
  margin-left: auto;
}

.find {
  display: flex;
  align-items: center;
  width: 178px;
  height: 27px;
  margin-right: 6px;
  padding: 0 4px;
  border: 1px solid #999;
  background-color: #fff;
}

.find input {
  flex: 1;
  min-width: 0;
  padding: 0;
  border: none;
  outline: none;
  font: inherit;
}

.find input::placeholder {
  color: #a6a6a6;
}

.find svg {
  width: 18px;
  height: 18px;
}

/* Ribbon */
.ribbon {
  display: flex;
  height: 117px;
  flex: none;
  padding: 2px 0;
  border-bottom: 1px solid #ccc;
}

.group {
  display: flex;
  flex-direction: column;
  flex: none;
  border-right: 1px solid #ccc;
}

.g-sketch { width: 192px; }
.g-feature { width: 558px; }
.g-sync { width: 142px; }
.g-std { width: 103px; }
.g-gear { width: 52px; }
.g-spring { width: 58px; }
.g-mach { width: 52px; }
.g-model { width: 98px; }
.g-dot { width: 30px; }
.g-dim { width: 288px; }
.g-surf { width: 67px; }
.g-asm { width: 215px; }

.group-body {
  display: flex;
  flex: 1;
}

.group-foot {
  display: flex;
  align-items: center;
  height: 20px;
  color: #1c6c80;
  white-space: nowrap;
}

.group-foot span {
  flex: 1;
  text-align: center;
}

.group-foot .drop {
  width: 26px;
}

.g-gear .drop,
.g-spring .drop,
.g-mach .drop,
.g-dot .drop {
  width: 20px;
}

.big {
  flex-direction: column;
  justify-content: flex-start;
  align-self: flex-start;
  padding-top: 2px;
  line-height: 22px;
  white-space: nowrap;
}

.big svg {
  width: 30px;
  height: 30px;
  margin: 1px 0 6px;
}

.big span {
  display: flex;
  align-items: center;
  gap: 6px;
  height: 23px;
}

.more svg {
  width: 38px;
  height: 34px;
  margin: 0 0 3px;
  padding: 8px 10px;
  border: 1px solid #dcdcdc;
  border-radius: 4px;
}

.g-sketch .group-body {
  padding-left: 12px;
}

.g-sketch .big {
  width: 52px;
}

.gallery {
  display: grid;
  grid-template-columns: 1fr 1fr;
  width: 86px;
  height: 87px;
  margin: 3px 0 0 11px;
  border: 1px solid #ccc;
}

.gallery svg {
  width: 24px;
  height: 24px;
}

.gallery-nav {
  display: flex;
  flex-direction: column;
  justify-content: space-around;
  width: 26px;
}

.gallery-nav button {
  height: 28px;
}

.gallery-nav svg {
  width: 10px;
  height: 10px;
}

.gallery-nav .up .caret {
  border-top: none;
  border-bottom: 4px solid #999;
}

.g-feature .group-body {
  padding-left: 11px;
}

.g-feature .big {
  min-width: 44px;
  margin-right: 7px;
}

.g-feature .more,
.g-sync .more {
  margin: 0 0 0 auto;
  padding-right: 8px;
}

.stack {
  display: flex;
  flex-direction: column;
  padding: 0 8px 0 0;
}

.stack button {
  height: 29px;
  justify-content: flex-start;
  gap: 4px;
  line-height: 22px;
  white-space: nowrap;
}

.stack .caret,
.asm-list .caret {
  margin-left: 6px;
}

.stack svg {
  width: 17px;
  height: 17px;
}

.g-sync .group-body {
  gap: 8px;
  padding-left: 12px;
}

.g-sync .more {
  padding-right: 7px;
}

.g-sync .stack {
  padding: 0;
}

.rows {
  display: flex;
  flex: 1;
  flex-direction: column;
  gap: 14px;
  padding: 12px 0 0 5px;
}

.rows div {
  display: flex;
  gap: 5px;
}

.rows .ic {
  width: 18px;
  height: 18px;
}

.g-surf .group-body {
  justify-content: center;
  padding-top: 10px;
}

.g-asm .group-body {
  justify-content: space-between;
  padding: 0 10px 0 12px;
}

.asm-list {
  display: flex;
  flex-direction: column;
  gap: 12px;
  padding-top: 10px;
}

.asm-list button {
  justify-content: flex-start;
  gap: 5px;
  height: 28px;
  white-space: nowrap;
}

.asm-list .off {
  color: #bdbdbd;
}

.asm-list svg {
  width: 22px;
  height: 22px;
}

.g-asm .stack {
  padding: 0;
}

.ribbon-end {
  display: flex;
  flex: 1;
  align-items: flex-end;
  justify-content: flex-end;
}

/* Selection bar */
.selection-bar {
  display: flex;
  align-items: center;
  height: 39px;
  flex: none;
  border-bottom: 1px solid #888;
}

.selection-bar > .text-btn {
  padding: 0 8px 0 9px;
}

.selection-bar .sep {
  height: 32px;
  align-self: center;
}

.select {
  position: relative;
  margin-left: 10px;
}

.select::after {
  content: "";
  position: absolute;
  right: 6px;
  top: 11px;
  border: 6px solid transparent;
  border-top: 6px solid #222;
  border-bottom: none;
  pointer-events: none;
}

.s-type {
  width: 192px;
  margin-left: 12px;
}

.s-scope {
  width: 202px;
}

.select select {
  appearance: none;
  width: 100%;
  height: 27px;
  padding: 0 6px;
  border: 1px solid #8a8a8a;
  border-radius: 0;
  background-color: #fff;
  font: inherit;
  color: inherit;
}

.icons {
  display: flex;
  align-items: center;
  gap: 3px;
  padding-left: 3px;
}

.icons .sep {
  margin: 0 5px;
}

.ic.on {
  background-color: #cbe6ec;
  outline: 1px solid #b4d6de;
}

.bar-end {
  margin-left: auto;
  align-self: flex-end;
}

/* Workspace */
.workspace {
  display: flex;
  flex: 1;
  min-height: 0;
}

.resource-bar {
  display: flex;
  flex-direction: column;
  width: 32px;
  flex: none;
  background-color: #dbdbdb;
  border-right: 1px solid #999;
}

.resource-bar button {
  height: 42px;
  margin-left: 3px;
}

.resource-bar svg {
  width: 24px;
  height: 24px;
}

.resource-bar .small {
  height: 28px;
  margin-bottom: 13px;
}

.resource-bar .small svg {
  width: 13px;
  height: 13px;
}

.resource-bar .active {
  margin-right: -1px;
  border: 1px solid #999;
  border-right: none;
  background-color: #fff;
}

.resource-bar .apart {
  margin-top: 12px;
}

.navigator {
  display: flex;
  flex-direction: column;
  width: 377px;
  flex: none;
  padding: 0 10px 5px 6px;
  font-size: 17px;
}

.nav-title {
  display: flex;
  align-items: center;
  justify-content: space-between;
  height: 35px;
  padding: 3px 6px 0 4px;
}

.nav-title h2 {
  margin: 0;
  font-size: 17px;
  font-weight: normal;
}

.nav-title svg {
  width: 18px;
  height: 18px;
}

.tree-box {
  display: flex;
  flex: 1;
  flex-direction: column;
  min-height: 0;
  padding-bottom: 4px;
  border: 1px solid #ccc;
  border-bottom: 4px double #999;
}

.tree-head {
  display: flex;
  align-items: center;
  gap: 20px;
  height: 30px;
  flex: none;
  padding-left: 7px;
  background-color: #efefef;
  border-bottom: 1px solid #ccc;
  border-right: 26px solid #c1c1c1;
}

.sort {
  border: 6px solid transparent;
  border-bottom: 6px solid #222;
  border-top: none;
}

.tree-view {
  display: flex;
  flex: 1;
  min-height: 0;
}

.tree {
  flex: 1;
  margin: 0;
  padding: 0;
  list-style: none;
  overflow: hidden;
}

.tree li {
  display: flex;
  align-items: center;
  height: 28px;
  padding-left: 28px;
  border-bottom: 1px solid #e8e8e8;
  white-space: nowrap;
}

.tree li:nth-child(even) {
  background-color: #f9f9f9;
}

.tree .root {
  gap: 3px;
  padding-left: 4px;
}

.tree .off {
  color: #a3a3a3;
}

.tree label {
  display: flex;
  align-items: center;
  gap: 2px;
}

.tree svg {
  width: 16px;
  height: 16px;
}

.tree input {
  appearance: none;
  width: 13px;
  height: 13px;
  margin: 0;
  border: 1px solid #222;
  background-color: #fff;
}

.tree input:checked::before {
  content: "";
  display: block;
  width: 11px;
  height: 11px;
  background-color: #2ea043;
  clip-path: polygon(5% 45%, 35% 60%, 85% 0, 100% 12%, 40% 100%, 0 60%);
}

.twig {
  position: relative;
  width: 12px;
  height: 28px;
  border-left: 1px dotted #888;
  background: repeating-linear-gradient(90deg, #fff0 0 1px, #999 1px 2px) 0 14px / 12px 1px no-repeat;
}

.toggle {
  width: 13px;
  height: 13px;
  border: 1px dotted #bbb;
  background-color: #fff;
  line-height: 12px;
}

.twig .toggle {
  position: absolute;
  left: -7px;
  top: 8px;
}

.v-scroll {
  display: flex;
  flex-direction: column;
  width: 26px;
  background-color: #f0f0f0;
}

.v-scroll .track {
  flex: 1;
  padding-top: 43px;
}

.v-scroll .thumb {
  height: 92%;
  background-color: #cdcdcd;
}

.h-scroll {
  display: flex;
  height: 25px;
  flex: none;
  padding-right: 26px;
  background-color: #f0f0f0;
}

.h-scroll .track {
  flex: 1;
}

.h-scroll .thumb {
  width: 51%;
  height: 24px;
  background-color: #cdcdcd;
}

.chev {
  width: 26px;
  height: 26px;
}

.chev::before {
  content: "";
  width: 8px;
  height: 8px;
  border: solid #444;
  border-width: 2px 0 0 2px;
  transform: rotate(45deg);
}

.chev.down::before {
  transform: rotate(225deg);
}

.chev.left::before {
  transform: rotate(-45deg);
}

.chev.right::before {
  transform: rotate(135deg);
}

.document {
  display: flex;
  flex: 1;
  flex-direction: column;
  min-width: 0;
  border-left: 1px solid #777;
}

.doc-tabs {
  display: flex;
  height: 31px;
  flex: none;
  border-bottom: 2px solid #5f9fb2;
}

.doc-tab {
  display: flex;
  align-items: center;
  gap: 5px;
  padding: 0 6px;
  font-size: 17px;
  color: #fff;
  background-color: #509fb6;
  white-space: nowrap;
}

.doc-tab svg {
  width: 16px;
  height: 16px;
}

.doc-tab .sm {
  width: 12px;
  height: 12px;
}

.viewport {
  flex: 1;
  min-height: 0;
  background: linear-gradient(#b4b4b4, #d4d4d4 45%, #e7e7e7 72%, #e7e7e7);
  border-right: 3px solid #d9d9d9;
}

.viewport svg {
  width: 100%;
  height: 100%;
}

.edge {
  fill: none;
  stroke: #2c2c2c;
  stroke-width: 1;
}

.axis {
  font-size: 14px;
}

.axis.x {
  fill: #b63a34;
  text-anchor: middle;
}

.axis.y {
  fill: #3f9c46;
}

.mark {
  font-family: "Liberation Serif", serif;
  font-size: 73px;
  fill: #e8e8e8;
  filter: drop-shadow(2px 1px 0 #555);
}

.mark .cjk {
  font-family: "Noto Sans CJK SC", sans-serif;
  font-size: 79px;
  font-weight: 300;
}

.border-bar {
  display: flex;
  flex-direction: column;
  align-items: center;
  width: 30px;
  flex: none;
  padding-top: 5px;
}

.border-bar button {
  height: 32px;
}

.border-bar .drop {
  height: 14px;
}

.border-bar svg {
  width: 24px;
  height: 24px;
}

.border-bar .fold {
  width: 100%;
  margin-top: 4px;
  flex: 1;
  align-items: flex-end;
  padding-bottom: 6px;
  border-top: 1px solid #ccc;
}

.fold::before {
  content: "";
  border: 4px solid transparent;
  border-right: 4px solid #222;
  border-left: none;
}

/* Status bar */
.status-bar {
  display: flex;
  align-items: center;
  justify-content: space-between;
  height: 25px;
  flex: none;
  padding: 0 20px 0 3px;
  border-top: 1px solid #999;
}

.status-bar p {
  margin: 0;
  font-size: 16px;
  font-weight: bold;
}

.status-bar div {
  display: flex;
  gap: 3px;
}
```
